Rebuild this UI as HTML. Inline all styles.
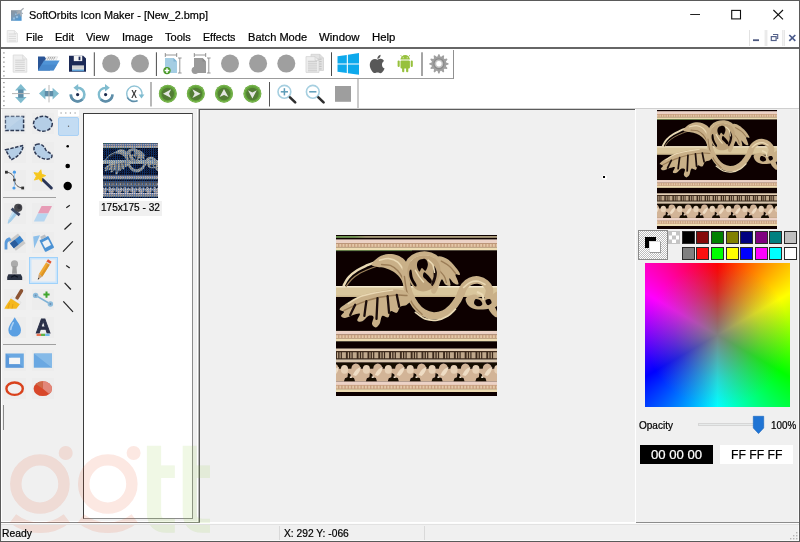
<!DOCTYPE html>
<html>
<head>
<meta charset="utf-8">
<title>SoftOrbits Icon Maker</title>
<style>
html,body{margin:0;padding:0;}
body{width:800px;height:542px;overflow:hidden;background:#f0f0f0;position:relative;font-family:"Liberation Sans",sans-serif;color:#000;}
.a{position:absolute;}
.t{position:absolute;white-space:nowrap;transform-origin:0 0;line-height:1;-webkit-text-stroke:0.22px currentColor;}
svg{position:absolute;overflow:visible;}
</style>
</head>
<body>
<!-- window frame -->
<div class="a" id="frame" style="left:0;top:0;width:798px;height:540px;border:1px solid #5a5a5a;"></div>
<!-- title + menu -->
<div class="a" id="titlebar" style="left:1px;top:1px;width:798px;height:46px;background:#fff;"></div>
<div class="a" id="menuline" style="left:1px;top:47px;width:798px;height:2px;background:#666;"></div>
<!-- toolbar background -->
<div class="a" id="tbbg" style="left:1px;top:49px;width:798px;height:59px;background:#fff;"></div>
<div class="a" id="tbline" style="left:1px;top:108px;width:798px;height:1px;background:#cfcfcf;"></div>


<!-- main panels -->
<div class="a" id="mdi" style="left:199px;top:109px;width:436px;height:414px;background:#f0f0f0;"></div>


<!-- toolbar 1 frame -->
<div class="a" style="left:1px;top:78px;width:453px;height:1px;background:#9c9c9c;"></div>
<div class="a" style="left:453px;top:50px;width:1px;height:29px;background:#909090;"></div>
<!-- toolbar 2 frame -->
<div class="a" style="left:357px;top:79px;width:2px;height:29px;background:#cbcbcb;"></div>

<!-- left tools panel -->
<div class="a" style="left:3.5px;top:113.2px;width:22px;height:21px;background:#ededed;"></div>
<div class="a" style="left:32.0px;top:113.2px;width:22px;height:21px;background:#ededed;"></div>
<div class="a" style="left:3.5px;top:142.0px;width:22px;height:21px;background:#ededed;"></div>
<div class="a" style="left:32.0px;top:142.0px;width:22px;height:21px;background:#ededed;"></div>
<div class="a" style="left:3.5px;top:169.5px;width:22px;height:21px;background:#ededed;"></div>
<div class="a" style="left:32.0px;top:169.5px;width:22px;height:21px;background:#ededed;"></div>
<div class="a" style="left:3.5px;top:203.2px;width:22px;height:21px;background:#ededed;"></div>
<div class="a" style="left:32.0px;top:203.2px;width:22px;height:21px;background:#ededed;"></div>
<div class="a" style="left:3.5px;top:231.5px;width:22px;height:21px;background:#ededed;"></div>
<div class="a" style="left:32.0px;top:231.5px;width:22px;height:21px;background:#ededed;"></div>
<div class="a" style="left:3.5px;top:260.0px;width:22px;height:21px;background:#ededed;"></div>
<div class="a" style="left:3.5px;top:288.5px;width:22px;height:21px;background:#ededed;"></div>
<div class="a" style="left:32.0px;top:288.5px;width:22px;height:21px;background:#ededed;"></div>
<div class="a" style="left:3.5px;top:316.5px;width:22px;height:21px;background:#ededed;"></div>
<div class="a" style="left:32.0px;top:316.5px;width:22px;height:21px;background:#ededed;"></div>
<div class="a" style="left:3.5px;top:350.0px;width:22px;height:21px;background:#ededed;"></div>
<div class="a" style="left:32.0px;top:350.0px;width:22px;height:21px;background:#ededed;"></div>
<div class="a" style="left:3.5px;top:378.2px;width:22px;height:21px;background:#ededed;"></div>
<div class="a" style="left:32.0px;top:378.2px;width:22px;height:21px;background:#ededed;"></div>

<div class="a" style="left:1px;top:109px;width:1px;height:414px;background:#fff;"></div>
<div class="a" style="left:58px;top:110px;width:21px;height:6px;background:#fff;"></div>
<div class="a" style="left:58px;top:116.5px;background:#c3dcf3;border:1px solid #a9d1f5;box-sizing:border-box;width:21px;height:19.5px;border-radius:2px;"></div>
<div class="a" style="left:29px;top:257px;width:29px;height:27px;box-sizing:border-box;border:1px solid #9fd2fb;background:#eeeff1;box-shadow:inset 0 0 0 1.5px #cbe5fb;"></div>
<div class="a" style="left:3px;top:197px;width:53px;height:1px;background:#a0a0a0;"></div>
<div class="a" style="left:3px;top:344px;width:53px;height:1px;background:#a0a0a0;"></div>
<div class="a" style="left:3px;top:405px;width:1px;height:25px;background:#8a8a8a;"></div>

<!-- thumbnail list -->
<div class="a" style="left:83px;top:113px;width:110px;height:406px;background:#fff;border-top:1px solid #3c3c3c;border-left:1px solid #3c3c3c;border-right:1px solid #8c8c8c;border-bottom:1px solid #8c8c8c;box-sizing:border-box;"></div>
<div class="a" style="left:99px;top:201px;width:63px;height:15px;background:#f0f0f0;"></div>

<!-- left dock frame (right + bottom) -->
<div class="a" style="left:197px;top:109px;width:1px;height:413px;background:#fff;"></div>
<div class="a" style="left:198px;top:109px;width:1px;height:413px;background:#b8b8b8;"></div><div class="a" style="left:199px;top:109px;width:1px;height:414px;background:#5e5e5e;"></div>
<div class="a" style="left:1px;top:521px;width:197px;height:1px;background:#fff;"></div>
<div class="a" style="left:1px;top:522px;width:199px;height:1px;background:#858585;"></div>

<!-- mdi client frame -->
<div class="a" style="left:200px;top:109px;width:435px;height:1px;background:#5c5c5c;"></div>
<div class="a" style="left:635px;top:109px;width:1px;height:414px;background:#fff;"></div>
<div class="a" style="left:200px;top:522px;width:436px;height:1px;background:#fff;"></div>

<!-- right panel -->
<div class="a" style="left:798px;top:109px;width:1px;height:432px;background:#fbfbfb;"></div>
<div class="a" style="left:636px;top:522px;width:163px;height:1px;background:#8c8c8c;"></div>

<svg style="left:336px;top:235px;overflow:hidden" width="161" height="161" viewBox="0 -1 161 161" preserveAspectRatio="none"><filter id="ob1"><feGaussianBlur stdDeviation="0.45"/></filter><g filter="url(#ob1)"><rect x="-4" y="-4" width="169" height="168" fill="#0b0506"/>
<linearGradient id="gtop" x1="0" x2="1" y1="0" y2="0"><stop offset="0" stop-color="#84b860"/><stop offset="0.13" stop-color="#8cb868"/><stop offset="0.2" stop-color="#c8bc90"/><stop offset="1" stop-color="#d4c29a"/></linearGradient>
<rect y="0.2" x="-4" width="169" height="1.5" fill="url(#gtop)"/>
<rect y="3.4" x="-4" width="169" height="3.9" fill="#ecd2c6"/>
<rect y="7.1" x="-4" width="169" height="4.6" fill="#c8a080"/>
<line x1="-3" x2="164" y1="9.4" y2="9.4" stroke="#e4c8a8" stroke-width="2.8" stroke-dasharray="1.8 1.4"/>
<rect y="11.5" x="-4" width="169" height="2.8" fill="#eedcb2"/>
<rect y="14.2" x="-4" width="80" height="0.9" fill="#6f9a50" opacity=".8"/>
<rect y="94.9" x="-4" width="169" height="3.7" fill="#ecd2c6"/>
<rect y="98.4" x="-4" width="169" height="4.4" fill="#c8a080"/>
<line x1="-3" x2="164" y1="100.6" y2="100.6" stroke="#e4c8a8" stroke-width="2.7" stroke-dasharray="1.8 1.4"/>
<rect y="102.6" x="-4" width="169" height="2.7" fill="#eedcb2"/>
<rect y="145.3" x="-4" width="169" height="3.9" fill="#ecd2c6"/>
<rect y="148.9" x="-4" width="169" height="4.5" fill="#c8a080"/>
<line x1="-3" x2="164" y1="151.2" y2="151.2" stroke="#e4c8a8" stroke-width="2.8" stroke-dasharray="1.8 1.4"/>
<rect y="153.2" x="-4" width="169" height="2.8" fill="#eedcb2"/>
<rect y="50" x="-4" width="169" height="11" fill="#d9c69c"/>
<rect y="50" x="-4" width="169" height="1.5" fill="#f4ead0"/>
<rect y="59.5" x="-4" width="169" height="1.5" fill="#cdb88e"/>
<rect y="112.5" x="-4" width="169" height="2.6" fill="#e6d0b6"/>
<rect y="115" x="-4" width="169" height="8.5" fill="#3c2a1c"/>
<line x1="1" x2="161" y1="119.2" y2="119.2" stroke="#bfa88c" stroke-width="6" stroke-dasharray="1.2 1.3 1.2 1.2 4 1.9"/>
<rect y="123.4" x="-4" width="169" height="3.1" fill="#d8c6ae"/>
<rect y="126.5" x="-4" width="169" height="18.8" fill="#d2b497"/>
<rect y="126.5" x="-4" width="169" height="6.2" fill="#120806"/>
<ellipse cx="-2.0" cy="133" rx="4.6" ry="5.6" fill="#d2b497"/>
<ellipse cx="8.5" cy="133.4" rx="3.6" ry="4.4" fill="#e6d0b6"/>
<path d="M-5.0 139q3 -7 8 -8q-1 6 -5 9z" fill="#eedcc4"/>
<path d="M8.0 145.3l1 -3l2.5 -1l0.5 -4.2l2.4 1.2l0.6 3l3 0.8l1 3.2z" fill="#120806"/>
<rect x="13.8" y="140.4" width="2" height="1.6" fill="#f0e4d0"/>
<ellipse cx="19.9" cy="133" rx="4.6" ry="5.6" fill="#d2b497"/>
<ellipse cx="30.4" cy="133.4" rx="3.6" ry="4.4" fill="#e6d0b6"/>
<path d="M16.9 139q3 -7 8 -8q-1 6 -5 9z" fill="#eedcc4"/>
<path d="M29.9 145.3l1 -3l2.5 -1l0.5 -4.2l2.4 1.2l0.6 3l3 0.8l1 3.2z" fill="#120806"/>
<rect x="35.7" y="140.4" width="2" height="1.6" fill="#f0e4d0"/>
<ellipse cx="41.8" cy="133" rx="4.6" ry="5.6" fill="#d2b497"/>
<ellipse cx="52.3" cy="133.4" rx="3.6" ry="4.4" fill="#e6d0b6"/>
<path d="M38.8 139q3 -7 8 -8q-1 6 -5 9z" fill="#eedcc4"/>
<path d="M51.8 145.3l1 -3l2.5 -1l0.5 -4.2l2.4 1.2l0.6 3l3 0.8l1 3.2z" fill="#120806"/>
<rect x="57.6" y="140.4" width="2" height="1.6" fill="#f0e4d0"/>
<ellipse cx="63.7" cy="133" rx="4.6" ry="5.6" fill="#d2b497"/>
<ellipse cx="74.2" cy="133.4" rx="3.6" ry="4.4" fill="#e6d0b6"/>
<path d="M60.7 139q3 -7 8 -8q-1 6 -5 9z" fill="#eedcc4"/>
<path d="M73.7 145.3l1 -3l2.5 -1l0.5 -4.2l2.4 1.2l0.6 3l3 0.8l1 3.2z" fill="#120806"/>
<rect x="79.5" y="140.4" width="2" height="1.6" fill="#f0e4d0"/>
<ellipse cx="85.6" cy="133" rx="4.6" ry="5.6" fill="#d2b497"/>
<ellipse cx="96.1" cy="133.4" rx="3.6" ry="4.4" fill="#e6d0b6"/>
<path d="M82.6 139q3 -7 8 -8q-1 6 -5 9z" fill="#eedcc4"/>
<path d="M95.6 145.3l1 -3l2.5 -1l0.5 -4.2l2.4 1.2l0.6 3l3 0.8l1 3.2z" fill="#120806"/>
<rect x="101.4" y="140.4" width="2" height="1.6" fill="#f0e4d0"/>
<ellipse cx="107.5" cy="133" rx="4.6" ry="5.6" fill="#d2b497"/>
<ellipse cx="118.0" cy="133.4" rx="3.6" ry="4.4" fill="#e6d0b6"/>
<path d="M104.5 139q3 -7 8 -8q-1 6 -5 9z" fill="#eedcc4"/>
<path d="M117.5 145.3l1 -3l2.5 -1l0.5 -4.2l2.4 1.2l0.6 3l3 0.8l1 3.2z" fill="#120806"/>
<rect x="123.3" y="140.4" width="2" height="1.6" fill="#f0e4d0"/>
<ellipse cx="129.4" cy="133" rx="4.6" ry="5.6" fill="#d2b497"/>
<ellipse cx="139.9" cy="133.4" rx="3.6" ry="4.4" fill="#e6d0b6"/>
<path d="M126.4 139q3 -7 8 -8q-1 6 -5 9z" fill="#eedcc4"/>
<path d="M139.4 145.3l1 -3l2.5 -1l0.5 -4.2l2.4 1.2l0.6 3l3 0.8l1 3.2z" fill="#120806"/>
<rect x="145.2" y="140.4" width="2" height="1.6" fill="#f0e4d0"/>
<ellipse cx="151.3" cy="133" rx="4.6" ry="5.6" fill="#d2b497"/>
<ellipse cx="161.8" cy="133.4" rx="3.6" ry="4.4" fill="#e6d0b6"/>
<path d="M148.3 139q3 -7 8 -8q-1 6 -5 9z" fill="#eedcc4"/>
<path d="M161.3 145.3l1 -3l2.5 -1l0.5 -4.2l2.4 1.2l0.6 3l3 0.8l1 3.2z" fill="#120806"/>
<rect x="167.1" y="140.4" width="2" height="1.6" fill="#f0e4d0"/>
<ellipse cx="173.2" cy="133" rx="4.6" ry="5.6" fill="#d2b497"/>
<ellipse cx="183.7" cy="133.4" rx="3.6" ry="4.4" fill="#e6d0b6"/>
<path d="M170.2 139q3 -7 8 -8q-1 6 -5 9z" fill="#eedcc4"/>
<path d="M183.2 145.3l1 -3l2.5 -1l0.5 -4.2l2.4 1.2l0.6 3l3 0.8l1 3.2z" fill="#120806"/>
<rect x="189.0" y="140.4" width="2" height="1.6" fill="#f0e4d0"/>
<path d="M7.7 49.5C8.5 48.1 10.3 43.9 12.6 41.4C14.8 38.9 18.1 36.3 21.3 34.3C24.4 32.3 28.2 30.7 31.4 29.2C34.6 27.8 39.0 26.4 40.5 25.8" fill="none" stroke="#ead9b4" stroke-width="2.5" stroke-linecap="round" stroke-linejoin="round"/>
<path d="M10.1 50.5C11.1 49.3 13.5 45.4 15.8 43.2C18.1 41.0 20.9 39.1 23.9 37.3C26.9 35.6 31.0 33.9 34.0 32.7C37.1 31.4 40.8 30.3 42.1 29.8" fill="none" stroke="#9c7e58" stroke-width="1.2" stroke-linecap="round" stroke-linejoin="round"/>
<path d="M35.4 28.6C35.7 27.0 40.1 22.9 42.9 21.1C45.7 19.4 49.2 18.4 52.2 18.1C55.3 17.8 58.5 18.4 61.2 19.3C63.9 20.3 66.6 21.8 68.4 23.8C70.3 25.7 71.3 28.3 72.1 31.1C72.9 33.8 73.4 37.1 73.3 40.4C73.2 43.6 72.2 49.2 71.3 50.5C70.4 51.9 69.1 50.0 67.8 48.5C66.6 47.0 65.6 43.5 63.8 41.4C62.0 39.2 59.6 37.1 57.1 35.5C54.6 33.9 51.6 32.6 49.0 31.9C46.4 31.1 43.8 31.4 41.5 30.9C39.3 30.3 35.2 30.3 35.4 28.6Z" fill="#c9b088"/>
<path d="M43.5 24.2C45.1 23.9 50.0 22.2 53.1 22.6C56.1 22.9 59.3 24.2 61.8 26.2C64.2 28.2 66.8 33.0 67.8 34.3" fill="none" stroke="#ead9b4" stroke-width="1.6" stroke-linecap="round" stroke-linejoin="round"/>
<path d="M45.6 28.6C47.0 28.8 51.6 28.4 54.3 29.4C57.0 30.5 59.7 32.5 61.8 34.7C63.9 36.9 66.0 41.1 66.8 42.4" fill="none" stroke="#9c7e58" stroke-width="1.5" stroke-linecap="round" stroke-linejoin="round"/>
<path d="M70.1 32.3C70.1 34.3 69.6 40.3 70.1 44.4C70.5 48.5 71.4 52.9 72.9 57.0C74.5 61.1 77.0 65.8 79.4 69.1C81.8 72.4 84.4 75.0 87.5 76.8C90.5 78.6 94.2 79.7 97.6 79.9C101.0 80.0 104.7 79.2 107.7 77.8C110.8 76.5 113.5 74.1 115.8 71.8C118.2 69.4 120.4 66.1 121.9 63.7C123.5 61.2 124.6 58.1 125.2 57.0" fill="none" stroke="#c9b088" stroke-width="7.4" stroke-linecap="round" stroke-linejoin="round"/>
<path d="M68.4 40.4C68.9 42.9 69.5 50.8 70.9 55.6C72.3 60.3 74.4 64.9 77.0 68.7C79.5 72.5 84.5 76.8 86.1 78.4" fill="none" stroke="#9c7e58" stroke-width="1.4" stroke-linecap="round" stroke-linejoin="round"/>
<path d="M79.4 76.4C81.0 77.5 85.5 81.6 89.1 82.9C92.8 84.2 97.5 84.6 101.3 84.1C105.0 83.6 108.7 81.9 111.8 80.1C114.8 78.2 118.2 74.3 119.5 73.2" fill="none" stroke="#ead9b4" stroke-width="1.7" stroke-linecap="round" stroke-linejoin="round"/>
<path d="M125.2 57.0C125.7 55.8 126.8 52.1 128.4 50.1C129.9 48.1 132.2 46.2 134.5 45.2C136.8 44.2 139.7 43.7 142.2 44.0C144.7 44.4 147.6 45.7 149.5 47.3C151.3 48.8 153.0 51.1 153.5 53.3C154.0 55.6 152.5 59.4 152.3 60.6" fill="none" stroke="#c9b088" stroke-width="7.6" stroke-linecap="round" stroke-linejoin="round"/>
<path d="M127.6 51.5C128.7 50.7 131.6 47.5 134.1 46.5C136.5 45.4 139.7 44.9 142.2 45.2C144.7 45.6 147.9 47.9 149.0 48.5" fill="none" stroke="#ead9b4" stroke-width="1.6" stroke-linecap="round" stroke-linejoin="round"/>
<path d="M129.6 63.1C129.8 61.4 132.4 60.4 134.1 59.6C135.7 58.9 138.3 58.3 139.7 58.6C141.2 58.9 141.3 61.0 142.8 61.6C144.3 62.2 146.7 62.8 148.8 62.2C151.0 61.7 153.7 59.7 155.9 58.6C158.1 57.5 160.7 54.9 162.0 55.6C163.4 56.2 164.4 60.1 164.0 62.7C163.7 65.2 162.3 69.0 160.0 70.8C157.6 72.5 153.2 72.8 149.9 73.2C146.5 73.6 142.6 73.8 139.7 73.2C136.9 72.6 134.3 71.4 132.6 69.7C131.0 68.1 129.4 64.7 129.6 63.1Z" fill="#c9b088"/>
<path d="M139.7 63.1C140.8 62.6 143.7 63.7 144.8 64.7C145.9 65.6 146.7 67.8 146.2 68.7C145.7 69.7 143.1 70.6 141.8 70.3C140.4 70.1 138.5 68.7 138.1 67.5C137.8 66.3 138.6 63.5 139.7 63.1Z" fill="#0b0506"/>
<path d="M149.5 64.3C149.9 63.3 152.9 62.6 153.9 63.1C154.9 63.5 155.9 66.1 155.5 67.1C155.1 68.1 152.5 69.6 151.5 69.1C150.5 68.7 149.0 65.3 149.5 64.3Z" fill="#0b0506"/>
<path d="M141.8 56.2C142.5 56.6 145.3 57.5 146.2 58.6C147.2 59.8 147.2 62.3 147.4 63.1" fill="none" stroke="#ead9b4" stroke-width="2.2" stroke-linecap="round" stroke-linejoin="round"/>
<path d="M152.3 70.8C152.8 69.6 156.3 68.6 158.0 69.9C159.6 71.3 161.7 77.0 162.0 78.9C162.3 80.7 161.2 81.6 160.0 81.3C158.8 80.9 156.2 78.6 154.9 76.8C153.6 75.1 151.8 71.9 152.3 70.8Z" fill="#c9b088"/>
<path d="M71.3 31.9C71.8 30.7 72.4 26.6 74.1 24.6C75.8 22.6 78.7 20.7 81.4 19.7C84.1 18.7 87.5 18.2 90.3 18.5C93.2 18.8 96.3 20.0 98.4 21.3C100.6 22.7 102.1 24.7 103.3 26.6C104.4 28.5 105.2 30.7 105.3 32.7C105.4 34.7 104.3 37.7 104.1 38.8" fill="none" stroke="#c9b088" stroke-width="6.2" stroke-linecap="round" stroke-linejoin="round"/>
<path d="M75.3 25.0C76.4 24.3 79.5 21.8 82.0 20.9C84.5 20.1 87.7 19.5 90.3 19.7C92.9 20.0 96.4 22.1 97.6 22.6" fill="none" stroke="#ead9b4" stroke-width="1.4" stroke-linecap="round" stroke-linejoin="round"/>
<path d="M102.3 20.5C103.8 19.4 107.9 21.3 110.4 22.6C112.8 23.8 115.1 26.2 117.1 28.2C119.0 30.3 121.2 33.0 122.3 34.7C123.5 36.5 124.4 38.1 123.9 38.8C123.5 39.4 119.9 37.5 119.5 38.4C119.1 39.2 121.0 42.3 121.5 44.0C122.0 45.7 123.0 48.0 122.3 48.5C121.6 48.9 118.9 47.9 117.5 46.9C116.0 45.8 113.9 42.0 113.4 42.4C112.9 42.8 115.1 48.5 114.4 49.5C113.7 50.5 110.8 49.5 109.4 48.5C107.9 47.5 106.9 42.9 105.7 43.4C104.5 43.9 103.4 49.2 102.3 51.5C101.1 53.9 100.0 56.9 98.8 57.6C97.6 58.3 95.5 57.4 95.2 55.6C94.8 53.7 96.1 49.3 96.8 46.5C97.5 43.6 98.9 41.2 99.6 38.4C100.4 35.5 100.8 32.2 101.3 29.2C101.7 26.3 100.7 21.6 102.3 20.5Z" fill="#c9b088"/>
<path d="M105.3 25.2C106.7 26.0 111.0 28.2 113.4 30.3C115.8 32.3 118.5 36.2 119.5 37.3" fill="none" stroke="#9c7e58" stroke-width="1.4" stroke-linecap="round" stroke-linejoin="round"/>
<path d="M103.3 34.3C104.1 35.3 107.2 38.4 108.3 40.4C109.5 42.4 110.0 45.4 110.4 46.5" fill="none" stroke="#9c7e58" stroke-width="1.3" stroke-linecap="round" stroke-linejoin="round"/>
<path d="M74.1 26.2C75.8 23.6 78.7 21.7 81.4 20.5C84.1 19.4 87.5 19.0 90.3 19.3C93.2 19.6 96.3 20.8 98.4 22.2C100.5 23.5 101.9 25.5 102.9 27.4C103.9 29.3 104.4 31.3 104.5 33.5C104.6 35.7 104.2 37.9 103.3 40.4C102.4 42.9 100.6 46.3 99.2 48.5C97.8 50.6 96.8 52.2 94.8 53.3C92.8 54.5 89.5 55.4 87.1 55.4C84.6 55.4 82.2 54.8 80.0 53.3C77.8 51.9 75.6 49.3 74.1 46.5C72.7 43.6 71.3 39.7 71.3 36.3C71.3 33.0 72.4 28.8 74.1 26.2Z" fill="#bfa47c"/>
<path d="M82.6 24.6C84.0 23.4 87.6 22.4 89.1 23.0C90.7 23.6 91.9 26.3 91.9 28.2C92.0 30.2 90.5 34.1 89.5 34.7C88.5 35.3 86.9 31.7 85.9 31.9C84.9 32.0 84.2 35.9 83.4 35.5C82.6 35.2 81.1 31.7 81.0 29.8C80.9 28.0 81.3 25.7 82.6 24.6Z" fill="#0b0506"/>
<path d="M88.7 36.3C90.1 36.9 94.6 42.1 95.6 44.0C96.5 45.9 95.3 47.7 94.4 47.7C93.4 47.6 91.1 44.8 89.9 43.6C88.7 42.4 87.3 41.6 87.1 40.4C86.9 39.2 87.3 35.7 88.7 36.3Z" fill="#0b0506"/>
<path d="M75.3 33.9C75.9 34.9 76.1 39.5 77.0 42.0C77.8 44.5 80.3 47.5 80.6 48.9C80.9 50.2 79.7 51.2 78.6 50.1C77.5 49.0 75.0 44.8 74.1 42.4C73.2 40.0 73.1 37.3 73.3 35.9C73.5 34.5 74.7 32.9 75.3 33.9Z" fill="#0b0506"/>
<path d="M98.4 30.3C99.0 30.7 100.6 34.0 100.9 36.3C101.1 38.6 100.3 41.8 99.6 44.0C99.0 46.2 97.5 49.0 96.8 49.7C96.1 50.4 95.0 49.6 95.2 48.1C95.3 46.5 97.3 42.7 97.6 40.4C97.9 38.0 97.1 35.6 97.2 33.9C97.3 32.2 97.8 29.8 98.4 30.3Z" fill="#1a0e0a"/>
<path d="M92.1 24.2C92.9 24.9 95.8 26.6 96.8 28.6C97.8 30.7 98.2 35.0 98.4 36.3" fill="none" stroke="#ead9b4" stroke-width="1.6" stroke-linecap="round" stroke-linejoin="round"/>
<path d="M79.4 34.3C80.0 35.3 81.7 38.4 83.0 40.4C84.4 42.3 86.7 45.1 87.5 46.0" fill="none" stroke="#ead9b4" stroke-width="1.5" stroke-linecap="round" stroke-linejoin="round"/>
<path d="M3.6 73.2C4.2 71.7 7.8 69.3 11.1 67.1C14.5 64.9 19.1 61.7 23.9 59.8C28.7 57.9 34.6 56.8 40.1 55.8C45.6 54.7 51.7 53.4 56.7 53.3C61.7 53.3 66.8 53.7 69.9 55.4C73.0 57.0 75.2 60.8 75.3 63.1C75.5 65.3 72.7 67.4 70.9 68.7C69.1 70.0 66.1 69.4 64.4 70.8C62.7 72.1 62.4 76.1 60.8 76.8C59.1 77.6 56.1 74.5 54.7 75.2C53.3 76.0 53.7 80.5 52.2 81.3C50.8 82.1 47.6 78.8 46.2 79.9C44.7 81.0 44.7 86.0 43.5 88.0C42.4 89.9 40.7 91.4 39.5 91.4C38.2 91.4 36.4 89.7 36.0 88.0C35.7 86.2 38.1 82.2 37.5 80.9C36.9 79.5 34.3 79.1 32.4 79.9C30.5 80.6 28.2 84.6 26.3 85.3C24.5 86.1 21.7 85.8 21.3 84.5C20.9 83.3 24.6 78.8 23.9 77.8C23.2 76.9 19.7 78.2 17.2 78.9C14.7 79.5 11.1 81.7 9.1 81.9C7.1 82.1 5.2 80.9 5.1 79.9C4.9 78.9 8.3 76.9 8.1 75.8C7.9 74.7 3.1 74.6 3.6 73.2Z" fill="#c9b088"/>
<path d="M8.1 74.4C10.8 73.2 18.6 69.2 24.3 67.1C30.0 65.0 36.5 63.0 42.5 61.6C48.6 60.3 56.0 59.3 60.8 59.0C65.5 58.7 69.2 59.5 70.9 59.6" fill="none" stroke="#9c7e58" stroke-width="1.5" stroke-linecap="round" stroke-linejoin="round"/>
<path d="M19.2 68.7C18.4 70.4 15.0 77.2 14.2 78.9" fill="none" stroke="#1c100a" stroke-width="2.3" stroke-linecap="round" stroke-linejoin="round"/>
<path d="M30.4 65.1C30.0 67.5 28.7 77.4 28.4 79.9" fill="none" stroke="#1c100a" stroke-width="2.3" stroke-linecap="round" stroke-linejoin="round"/>
<path d="M41.5 62.2C41.3 65.7 40.7 79.5 40.5 82.9" fill="none" stroke="#1c100a" stroke-width="2.3" stroke-linecap="round" stroke-linejoin="round"/>
<path d="M51.6 60.2C51.9 63.0 52.8 74.1 53.1 76.8" fill="none" stroke="#1c100a" stroke-width="2.3" stroke-linecap="round" stroke-linejoin="round"/>
<path d="M60.8 59.0C61.2 61.0 62.8 68.8 63.2 70.8" fill="none" stroke="#1c100a" stroke-width="2.3" stroke-linecap="round" stroke-linejoin="round"/>
<path d="M12.2 67.7C14.2 66.5 19.6 62.5 24.3 60.6C29.0 58.8 35.1 57.7 40.5 56.6C45.9 55.5 54.0 54.6 56.7 54.1" fill="none" stroke="#ead9b4" stroke-width="1.4" stroke-linecap="round" stroke-linejoin="round"/></g></svg>
<svg style="left:657px;top:110px;overflow:hidden" width="120" height="119" viewBox="0 1.8 161 158.2" preserveAspectRatio="none"><filter id="ob2"><feGaussianBlur stdDeviation="0.45"/></filter><g filter="url(#ob2)"><rect x="-4" y="-4" width="169" height="168" fill="#0b0506"/>
<linearGradient id="gtop" x1="0" x2="1" y1="0" y2="0"><stop offset="0" stop-color="#84b860"/><stop offset="0.13" stop-color="#8cb868"/><stop offset="0.2" stop-color="#c8bc90"/><stop offset="1" stop-color="#d4c29a"/></linearGradient>
<rect y="0.2" x="-4" width="169" height="1.5" fill="url(#gtop)"/>
<rect y="3.4" x="-4" width="169" height="3.9" fill="#ecd2c6"/>
<rect y="7.1" x="-4" width="169" height="4.6" fill="#c8a080"/>
<line x1="-3" x2="164" y1="9.4" y2="9.4" stroke="#e4c8a8" stroke-width="2.8" stroke-dasharray="1.8 1.4"/>
<rect y="11.5" x="-4" width="169" height="2.8" fill="#eedcb2"/>
<rect y="14.2" x="-4" width="80" height="0.9" fill="#6f9a50" opacity=".8"/>
<rect y="94.9" x="-4" width="169" height="3.7" fill="#ecd2c6"/>
<rect y="98.4" x="-4" width="169" height="4.4" fill="#c8a080"/>
<line x1="-3" x2="164" y1="100.6" y2="100.6" stroke="#e4c8a8" stroke-width="2.7" stroke-dasharray="1.8 1.4"/>
<rect y="102.6" x="-4" width="169" height="2.7" fill="#eedcb2"/>
<rect y="145.3" x="-4" width="169" height="3.9" fill="#ecd2c6"/>
<rect y="148.9" x="-4" width="169" height="4.5" fill="#c8a080"/>
<line x1="-3" x2="164" y1="151.2" y2="151.2" stroke="#e4c8a8" stroke-width="2.8" stroke-dasharray="1.8 1.4"/>
<rect y="153.2" x="-4" width="169" height="2.8" fill="#eedcb2"/>
<rect y="50" x="-4" width="169" height="11" fill="#d9c69c"/>
<rect y="50" x="-4" width="169" height="1.5" fill="#f4ead0"/>
<rect y="59.5" x="-4" width="169" height="1.5" fill="#cdb88e"/>
<rect y="112.5" x="-4" width="169" height="2.6" fill="#e6d0b6"/>
<rect y="115" x="-4" width="169" height="8.5" fill="#3c2a1c"/>
<line x1="1" x2="161" y1="119.2" y2="119.2" stroke="#bfa88c" stroke-width="6" stroke-dasharray="1.2 1.3 1.2 1.2 4 1.9"/>
<rect y="123.4" x="-4" width="169" height="3.1" fill="#d8c6ae"/>
<rect y="126.5" x="-4" width="169" height="18.8" fill="#d2b497"/>
<rect y="126.5" x="-4" width="169" height="6.2" fill="#120806"/>
<ellipse cx="-2.0" cy="133" rx="4.6" ry="5.6" fill="#d2b497"/>
<ellipse cx="8.5" cy="133.4" rx="3.6" ry="4.4" fill="#e6d0b6"/>
<path d="M-5.0 139q3 -7 8 -8q-1 6 -5 9z" fill="#eedcc4"/>
<path d="M8.0 145.3l1 -3l2.5 -1l0.5 -4.2l2.4 1.2l0.6 3l3 0.8l1 3.2z" fill="#120806"/>
<rect x="13.8" y="140.4" width="2" height="1.6" fill="#f0e4d0"/>
<ellipse cx="19.9" cy="133" rx="4.6" ry="5.6" fill="#d2b497"/>
<ellipse cx="30.4" cy="133.4" rx="3.6" ry="4.4" fill="#e6d0b6"/>
<path d="M16.9 139q3 -7 8 -8q-1 6 -5 9z" fill="#eedcc4"/>
<path d="M29.9 145.3l1 -3l2.5 -1l0.5 -4.2l2.4 1.2l0.6 3l3 0.8l1 3.2z" fill="#120806"/>
<rect x="35.7" y="140.4" width="2" height="1.6" fill="#f0e4d0"/>
<ellipse cx="41.8" cy="133" rx="4.6" ry="5.6" fill="#d2b497"/>
<ellipse cx="52.3" cy="133.4" rx="3.6" ry="4.4" fill="#e6d0b6"/>
<path d="M38.8 139q3 -7 8 -8q-1 6 -5 9z" fill="#eedcc4"/>
<path d="M51.8 145.3l1 -3l2.5 -1l0.5 -4.2l2.4 1.2l0.6 3l3 0.8l1 3.2z" fill="#120806"/>
<rect x="57.6" y="140.4" width="2" height="1.6" fill="#f0e4d0"/>
<ellipse cx="63.7" cy="133" rx="4.6" ry="5.6" fill="#d2b497"/>
<ellipse cx="74.2" cy="133.4" rx="3.6" ry="4.4" fill="#e6d0b6"/>
<path d="M60.7 139q3 -7 8 -8q-1 6 -5 9z" fill="#eedcc4"/>
<path d="M73.7 145.3l1 -3l2.5 -1l0.5 -4.2l2.4 1.2l0.6 3l3 0.8l1 3.2z" fill="#120806"/>
<rect x="79.5" y="140.4" width="2" height="1.6" fill="#f0e4d0"/>
<ellipse cx="85.6" cy="133" rx="4.6" ry="5.6" fill="#d2b497"/>
<ellipse cx="96.1" cy="133.4" rx="3.6" ry="4.4" fill="#e6d0b6"/>
<path d="M82.6 139q3 -7 8 -8q-1 6 -5 9z" fill="#eedcc4"/>
<path d="M95.6 145.3l1 -3l2.5 -1l0.5 -4.2l2.4 1.2l0.6 3l3 0.8l1 3.2z" fill="#120806"/>
<rect x="101.4" y="140.4" width="2" height="1.6" fill="#f0e4d0"/>
<ellipse cx="107.5" cy="133" rx="4.6" ry="5.6" fill="#d2b497"/>
<ellipse cx="118.0" cy="133.4" rx="3.6" ry="4.4" fill="#e6d0b6"/>
<path d="M104.5 139q3 -7 8 -8q-1 6 -5 9z" fill="#eedcc4"/>
<path d="M117.5 145.3l1 -3l2.5 -1l0.5 -4.2l2.4 1.2l0.6 3l3 0.8l1 3.2z" fill="#120806"/>
<rect x="123.3" y="140.4" width="2" height="1.6" fill="#f0e4d0"/>
<ellipse cx="129.4" cy="133" rx="4.6" ry="5.6" fill="#d2b497"/>
<ellipse cx="139.9" cy="133.4" rx="3.6" ry="4.4" fill="#e6d0b6"/>
<path d="M126.4 139q3 -7 8 -8q-1 6 -5 9z" fill="#eedcc4"/>
<path d="M139.4 145.3l1 -3l2.5 -1l0.5 -4.2l2.4 1.2l0.6 3l3 0.8l1 3.2z" fill="#120806"/>
<rect x="145.2" y="140.4" width="2" height="1.6" fill="#f0e4d0"/>
<ellipse cx="151.3" cy="133" rx="4.6" ry="5.6" fill="#d2b497"/>
<ellipse cx="161.8" cy="133.4" rx="3.6" ry="4.4" fill="#e6d0b6"/>
<path d="M148.3 139q3 -7 8 -8q-1 6 -5 9z" fill="#eedcc4"/>
<path d="M161.3 145.3l1 -3l2.5 -1l0.5 -4.2l2.4 1.2l0.6 3l3 0.8l1 3.2z" fill="#120806"/>
<rect x="167.1" y="140.4" width="2" height="1.6" fill="#f0e4d0"/>
<ellipse cx="173.2" cy="133" rx="4.6" ry="5.6" fill="#d2b497"/>
<ellipse cx="183.7" cy="133.4" rx="3.6" ry="4.4" fill="#e6d0b6"/>
<path d="M170.2 139q3 -7 8 -8q-1 6 -5 9z" fill="#eedcc4"/>
<path d="M183.2 145.3l1 -3l2.5 -1l0.5 -4.2l2.4 1.2l0.6 3l3 0.8l1 3.2z" fill="#120806"/>
<rect x="189.0" y="140.4" width="2" height="1.6" fill="#f0e4d0"/>
<path d="M7.7 49.5C8.5 48.1 10.3 43.9 12.6 41.4C14.8 38.9 18.1 36.3 21.3 34.3C24.4 32.3 28.2 30.7 31.4 29.2C34.6 27.8 39.0 26.4 40.5 25.8" fill="none" stroke="#ead9b4" stroke-width="2.5" stroke-linecap="round" stroke-linejoin="round"/>
<path d="M10.1 50.5C11.1 49.3 13.5 45.4 15.8 43.2C18.1 41.0 20.9 39.1 23.9 37.3C26.9 35.6 31.0 33.9 34.0 32.7C37.1 31.4 40.8 30.3 42.1 29.8" fill="none" stroke="#9c7e58" stroke-width="1.2" stroke-linecap="round" stroke-linejoin="round"/>
<path d="M35.4 28.6C35.7 27.0 40.1 22.9 42.9 21.1C45.7 19.4 49.2 18.4 52.2 18.1C55.3 17.8 58.5 18.4 61.2 19.3C63.9 20.3 66.6 21.8 68.4 23.8C70.3 25.7 71.3 28.3 72.1 31.1C72.9 33.8 73.4 37.1 73.3 40.4C73.2 43.6 72.2 49.2 71.3 50.5C70.4 51.9 69.1 50.0 67.8 48.5C66.6 47.0 65.6 43.5 63.8 41.4C62.0 39.2 59.6 37.1 57.1 35.5C54.6 33.9 51.6 32.6 49.0 31.9C46.4 31.1 43.8 31.4 41.5 30.9C39.3 30.3 35.2 30.3 35.4 28.6Z" fill="#c9b088"/>
<path d="M43.5 24.2C45.1 23.9 50.0 22.2 53.1 22.6C56.1 22.9 59.3 24.2 61.8 26.2C64.2 28.2 66.8 33.0 67.8 34.3" fill="none" stroke="#ead9b4" stroke-width="1.6" stroke-linecap="round" stroke-linejoin="round"/>
<path d="M45.6 28.6C47.0 28.8 51.6 28.4 54.3 29.4C57.0 30.5 59.7 32.5 61.8 34.7C63.9 36.9 66.0 41.1 66.8 42.4" fill="none" stroke="#9c7e58" stroke-width="1.5" stroke-linecap="round" stroke-linejoin="round"/>
<path d="M70.1 32.3C70.1 34.3 69.6 40.3 70.1 44.4C70.5 48.5 71.4 52.9 72.9 57.0C74.5 61.1 77.0 65.8 79.4 69.1C81.8 72.4 84.4 75.0 87.5 76.8C90.5 78.6 94.2 79.7 97.6 79.9C101.0 80.0 104.7 79.2 107.7 77.8C110.8 76.5 113.5 74.1 115.8 71.8C118.2 69.4 120.4 66.1 121.9 63.7C123.5 61.2 124.6 58.1 125.2 57.0" fill="none" stroke="#c9b088" stroke-width="7.4" stroke-linecap="round" stroke-linejoin="round"/>
<path d="M68.4 40.4C68.9 42.9 69.5 50.8 70.9 55.6C72.3 60.3 74.4 64.9 77.0 68.7C79.5 72.5 84.5 76.8 86.1 78.4" fill="none" stroke="#9c7e58" stroke-width="1.4" stroke-linecap="round" stroke-linejoin="round"/>
<path d="M79.4 76.4C81.0 77.5 85.5 81.6 89.1 82.9C92.8 84.2 97.5 84.6 101.3 84.1C105.0 83.6 108.7 81.9 111.8 80.1C114.8 78.2 118.2 74.3 119.5 73.2" fill="none" stroke="#ead9b4" stroke-width="1.7" stroke-linecap="round" stroke-linejoin="round"/>
<path d="M125.2 57.0C125.7 55.8 126.8 52.1 128.4 50.1C129.9 48.1 132.2 46.2 134.5 45.2C136.8 44.2 139.7 43.7 142.2 44.0C144.7 44.4 147.6 45.7 149.5 47.3C151.3 48.8 153.0 51.1 153.5 53.3C154.0 55.6 152.5 59.4 152.3 60.6" fill="none" stroke="#c9b088" stroke-width="7.6" stroke-linecap="round" stroke-linejoin="round"/>
<path d="M127.6 51.5C128.7 50.7 131.6 47.5 134.1 46.5C136.5 45.4 139.7 44.9 142.2 45.2C144.7 45.6 147.9 47.9 149.0 48.5" fill="none" stroke="#ead9b4" stroke-width="1.6" stroke-linecap="round" stroke-linejoin="round"/>
<path d="M129.6 63.1C129.8 61.4 132.4 60.4 134.1 59.6C135.7 58.9 138.3 58.3 139.7 58.6C141.2 58.9 141.3 61.0 142.8 61.6C144.3 62.2 146.7 62.8 148.8 62.2C151.0 61.7 153.7 59.7 155.9 58.6C158.1 57.5 160.7 54.9 162.0 55.6C163.4 56.2 164.4 60.1 164.0 62.7C163.7 65.2 162.3 69.0 160.0 70.8C157.6 72.5 153.2 72.8 149.9 73.2C146.5 73.6 142.6 73.8 139.7 73.2C136.9 72.6 134.3 71.4 132.6 69.7C131.0 68.1 129.4 64.7 129.6 63.1Z" fill="#c9b088"/>
<path d="M139.7 63.1C140.8 62.6 143.7 63.7 144.8 64.7C145.9 65.6 146.7 67.8 146.2 68.7C145.7 69.7 143.1 70.6 141.8 70.3C140.4 70.1 138.5 68.7 138.1 67.5C137.8 66.3 138.6 63.5 139.7 63.1Z" fill="#0b0506"/>
<path d="M149.5 64.3C149.9 63.3 152.9 62.6 153.9 63.1C154.9 63.5 155.9 66.1 155.5 67.1C155.1 68.1 152.5 69.6 151.5 69.1C150.5 68.7 149.0 65.3 149.5 64.3Z" fill="#0b0506"/>
<path d="M141.8 56.2C142.5 56.6 145.3 57.5 146.2 58.6C147.2 59.8 147.2 62.3 147.4 63.1" fill="none" stroke="#ead9b4" stroke-width="2.2" stroke-linecap="round" stroke-linejoin="round"/>
<path d="M152.3 70.8C152.8 69.6 156.3 68.6 158.0 69.9C159.6 71.3 161.7 77.0 162.0 78.9C162.3 80.7 161.2 81.6 160.0 81.3C158.8 80.9 156.2 78.6 154.9 76.8C153.6 75.1 151.8 71.9 152.3 70.8Z" fill="#c9b088"/>
<path d="M71.3 31.9C71.8 30.7 72.4 26.6 74.1 24.6C75.8 22.6 78.7 20.7 81.4 19.7C84.1 18.7 87.5 18.2 90.3 18.5C93.2 18.8 96.3 20.0 98.4 21.3C100.6 22.7 102.1 24.7 103.3 26.6C104.4 28.5 105.2 30.7 105.3 32.7C105.4 34.7 104.3 37.7 104.1 38.8" fill="none" stroke="#c9b088" stroke-width="6.2" stroke-linecap="round" stroke-linejoin="round"/>
<path d="M75.3 25.0C76.4 24.3 79.5 21.8 82.0 20.9C84.5 20.1 87.7 19.5 90.3 19.7C92.9 20.0 96.4 22.1 97.6 22.6" fill="none" stroke="#ead9b4" stroke-width="1.4" stroke-linecap="round" stroke-linejoin="round"/>
<path d="M102.3 20.5C103.8 19.4 107.9 21.3 110.4 22.6C112.8 23.8 115.1 26.2 117.1 28.2C119.0 30.3 121.2 33.0 122.3 34.7C123.5 36.5 124.4 38.1 123.9 38.8C123.5 39.4 119.9 37.5 119.5 38.4C119.1 39.2 121.0 42.3 121.5 44.0C122.0 45.7 123.0 48.0 122.3 48.5C121.6 48.9 118.9 47.9 117.5 46.9C116.0 45.8 113.9 42.0 113.4 42.4C112.9 42.8 115.1 48.5 114.4 49.5C113.7 50.5 110.8 49.5 109.4 48.5C107.9 47.5 106.9 42.9 105.7 43.4C104.5 43.9 103.4 49.2 102.3 51.5C101.1 53.9 100.0 56.9 98.8 57.6C97.6 58.3 95.5 57.4 95.2 55.6C94.8 53.7 96.1 49.3 96.8 46.5C97.5 43.6 98.9 41.2 99.6 38.4C100.4 35.5 100.8 32.2 101.3 29.2C101.7 26.3 100.7 21.6 102.3 20.5Z" fill="#c9b088"/>
<path d="M105.3 25.2C106.7 26.0 111.0 28.2 113.4 30.3C115.8 32.3 118.5 36.2 119.5 37.3" fill="none" stroke="#9c7e58" stroke-width="1.4" stroke-linecap="round" stroke-linejoin="round"/>
<path d="M103.3 34.3C104.1 35.3 107.2 38.4 108.3 40.4C109.5 42.4 110.0 45.4 110.4 46.5" fill="none" stroke="#9c7e58" stroke-width="1.3" stroke-linecap="round" stroke-linejoin="round"/>
<path d="M74.1 26.2C75.8 23.6 78.7 21.7 81.4 20.5C84.1 19.4 87.5 19.0 90.3 19.3C93.2 19.6 96.3 20.8 98.4 22.2C100.5 23.5 101.9 25.5 102.9 27.4C103.9 29.3 104.4 31.3 104.5 33.5C104.6 35.7 104.2 37.9 103.3 40.4C102.4 42.9 100.6 46.3 99.2 48.5C97.8 50.6 96.8 52.2 94.8 53.3C92.8 54.5 89.5 55.4 87.1 55.4C84.6 55.4 82.2 54.8 80.0 53.3C77.8 51.9 75.6 49.3 74.1 46.5C72.7 43.6 71.3 39.7 71.3 36.3C71.3 33.0 72.4 28.8 74.1 26.2Z" fill="#bfa47c"/>
<path d="M82.6 24.6C84.0 23.4 87.6 22.4 89.1 23.0C90.7 23.6 91.9 26.3 91.9 28.2C92.0 30.2 90.5 34.1 89.5 34.7C88.5 35.3 86.9 31.7 85.9 31.9C84.9 32.0 84.2 35.9 83.4 35.5C82.6 35.2 81.1 31.7 81.0 29.8C80.9 28.0 81.3 25.7 82.6 24.6Z" fill="#0b0506"/>
<path d="M88.7 36.3C90.1 36.9 94.6 42.1 95.6 44.0C96.5 45.9 95.3 47.7 94.4 47.7C93.4 47.6 91.1 44.8 89.9 43.6C88.7 42.4 87.3 41.6 87.1 40.4C86.9 39.2 87.3 35.7 88.7 36.3Z" fill="#0b0506"/>
<path d="M75.3 33.9C75.9 34.9 76.1 39.5 77.0 42.0C77.8 44.5 80.3 47.5 80.6 48.9C80.9 50.2 79.7 51.2 78.6 50.1C77.5 49.0 75.0 44.8 74.1 42.4C73.2 40.0 73.1 37.3 73.3 35.9C73.5 34.5 74.7 32.9 75.3 33.9Z" fill="#0b0506"/>
<path d="M98.4 30.3C99.0 30.7 100.6 34.0 100.9 36.3C101.1 38.6 100.3 41.8 99.6 44.0C99.0 46.2 97.5 49.0 96.8 49.7C96.1 50.4 95.0 49.6 95.2 48.1C95.3 46.5 97.3 42.7 97.6 40.4C97.9 38.0 97.1 35.6 97.2 33.9C97.3 32.2 97.8 29.8 98.4 30.3Z" fill="#1a0e0a"/>
<path d="M92.1 24.2C92.9 24.9 95.8 26.6 96.8 28.6C97.8 30.7 98.2 35.0 98.4 36.3" fill="none" stroke="#ead9b4" stroke-width="1.6" stroke-linecap="round" stroke-linejoin="round"/>
<path d="M79.4 34.3C80.0 35.3 81.7 38.4 83.0 40.4C84.4 42.3 86.7 45.1 87.5 46.0" fill="none" stroke="#ead9b4" stroke-width="1.5" stroke-linecap="round" stroke-linejoin="round"/>
<path d="M3.6 73.2C4.2 71.7 7.8 69.3 11.1 67.1C14.5 64.9 19.1 61.7 23.9 59.8C28.7 57.9 34.6 56.8 40.1 55.8C45.6 54.7 51.7 53.4 56.7 53.3C61.7 53.3 66.8 53.7 69.9 55.4C73.0 57.0 75.2 60.8 75.3 63.1C75.5 65.3 72.7 67.4 70.9 68.7C69.1 70.0 66.1 69.4 64.4 70.8C62.7 72.1 62.4 76.1 60.8 76.8C59.1 77.6 56.1 74.5 54.7 75.2C53.3 76.0 53.7 80.5 52.2 81.3C50.8 82.1 47.6 78.8 46.2 79.9C44.7 81.0 44.7 86.0 43.5 88.0C42.4 89.9 40.7 91.4 39.5 91.4C38.2 91.4 36.4 89.7 36.0 88.0C35.7 86.2 38.1 82.2 37.5 80.9C36.9 79.5 34.3 79.1 32.4 79.9C30.5 80.6 28.2 84.6 26.3 85.3C24.5 86.1 21.7 85.8 21.3 84.5C20.9 83.3 24.6 78.8 23.9 77.8C23.2 76.9 19.7 78.2 17.2 78.9C14.7 79.5 11.1 81.7 9.1 81.9C7.1 82.1 5.2 80.9 5.1 79.9C4.9 78.9 8.3 76.9 8.1 75.8C7.9 74.7 3.1 74.6 3.6 73.2Z" fill="#c9b088"/>
<path d="M8.1 74.4C10.8 73.2 18.6 69.2 24.3 67.1C30.0 65.0 36.5 63.0 42.5 61.6C48.6 60.3 56.0 59.3 60.8 59.0C65.5 58.7 69.2 59.5 70.9 59.6" fill="none" stroke="#9c7e58" stroke-width="1.5" stroke-linecap="round" stroke-linejoin="round"/>
<path d="M19.2 68.7C18.4 70.4 15.0 77.2 14.2 78.9" fill="none" stroke="#1c100a" stroke-width="2.3" stroke-linecap="round" stroke-linejoin="round"/>
<path d="M30.4 65.1C30.0 67.5 28.7 77.4 28.4 79.9" fill="none" stroke="#1c100a" stroke-width="2.3" stroke-linecap="round" stroke-linejoin="round"/>
<path d="M41.5 62.2C41.3 65.7 40.7 79.5 40.5 82.9" fill="none" stroke="#1c100a" stroke-width="2.3" stroke-linecap="round" stroke-linejoin="round"/>
<path d="M51.6 60.2C51.9 63.0 52.8 74.1 53.1 76.8" fill="none" stroke="#1c100a" stroke-width="2.3" stroke-linecap="round" stroke-linejoin="round"/>
<path d="M60.8 59.0C61.2 61.0 62.8 68.8 63.2 70.8" fill="none" stroke="#1c100a" stroke-width="2.3" stroke-linecap="round" stroke-linejoin="round"/>
<path d="M12.2 67.7C14.2 66.5 19.6 62.5 24.3 60.6C29.0 58.8 35.1 57.7 40.5 56.6C45.9 55.5 54.0 54.6 56.7 54.1" fill="none" stroke="#ead9b4" stroke-width="1.4" stroke-linecap="round" stroke-linejoin="round"/></g></svg>
<svg style="left:103px;top:143px;overflow:hidden" width="55" height="55" viewBox="0 0 161 160" preserveAspectRatio="none"><filter id="ob3"><feGaussianBlur stdDeviation="0.45"/></filter><g filter="url(#ob3)"><rect x="-4" y="-4" width="169" height="168" fill="#0b0506"/>
<linearGradient id="gtop" x1="0" x2="1" y1="0" y2="0"><stop offset="0" stop-color="#84b860"/><stop offset="0.13" stop-color="#8cb868"/><stop offset="0.2" stop-color="#c8bc90"/><stop offset="1" stop-color="#d4c29a"/></linearGradient>
<rect y="0.2" x="-4" width="169" height="1.5" fill="url(#gtop)"/>
<rect y="3.4" x="-4" width="169" height="3.9" fill="#ecd2c6"/>
<rect y="7.1" x="-4" width="169" height="4.6" fill="#c8a080"/>
<line x1="-3" x2="164" y1="9.4" y2="9.4" stroke="#e4c8a8" stroke-width="2.8" stroke-dasharray="1.8 1.4"/>
<rect y="11.5" x="-4" width="169" height="2.8" fill="#eedcb2"/>
<rect y="14.2" x="-4" width="80" height="0.9" fill="#6f9a50" opacity=".8"/>
<rect y="94.9" x="-4" width="169" height="3.7" fill="#ecd2c6"/>
<rect y="98.4" x="-4" width="169" height="4.4" fill="#c8a080"/>
<line x1="-3" x2="164" y1="100.6" y2="100.6" stroke="#e4c8a8" stroke-width="2.7" stroke-dasharray="1.8 1.4"/>
<rect y="102.6" x="-4" width="169" height="2.7" fill="#eedcb2"/>
<rect y="145.3" x="-4" width="169" height="3.9" fill="#ecd2c6"/>
<rect y="148.9" x="-4" width="169" height="4.5" fill="#c8a080"/>
<line x1="-3" x2="164" y1="151.2" y2="151.2" stroke="#e4c8a8" stroke-width="2.8" stroke-dasharray="1.8 1.4"/>
<rect y="153.2" x="-4" width="169" height="2.8" fill="#eedcb2"/>
<rect y="50" x="-4" width="169" height="11" fill="#d9c69c"/>
<rect y="50" x="-4" width="169" height="1.5" fill="#f4ead0"/>
<rect y="59.5" x="-4" width="169" height="1.5" fill="#cdb88e"/>
<rect y="112.5" x="-4" width="169" height="2.6" fill="#e6d0b6"/>
<rect y="115" x="-4" width="169" height="8.5" fill="#3c2a1c"/>
<line x1="1" x2="161" y1="119.2" y2="119.2" stroke="#bfa88c" stroke-width="6" stroke-dasharray="1.2 1.3 1.2 1.2 4 1.9"/>
<rect y="123.4" x="-4" width="169" height="3.1" fill="#d8c6ae"/>
<rect y="126.5" x="-4" width="169" height="18.8" fill="#d2b497"/>
<rect y="126.5" x="-4" width="169" height="6.2" fill="#120806"/>
<ellipse cx="-2.0" cy="133" rx="4.6" ry="5.6" fill="#d2b497"/>
<ellipse cx="8.5" cy="133.4" rx="3.6" ry="4.4" fill="#e6d0b6"/>
<path d="M-5.0 139q3 -7 8 -8q-1 6 -5 9z" fill="#eedcc4"/>
<path d="M8.0 145.3l1 -3l2.5 -1l0.5 -4.2l2.4 1.2l0.6 3l3 0.8l1 3.2z" fill="#120806"/>
<rect x="13.8" y="140.4" width="2" height="1.6" fill="#f0e4d0"/>
<ellipse cx="19.9" cy="133" rx="4.6" ry="5.6" fill="#d2b497"/>
<ellipse cx="30.4" cy="133.4" rx="3.6" ry="4.4" fill="#e6d0b6"/>
<path d="M16.9 139q3 -7 8 -8q-1 6 -5 9z" fill="#eedcc4"/>
<path d="M29.9 145.3l1 -3l2.5 -1l0.5 -4.2l2.4 1.2l0.6 3l3 0.8l1 3.2z" fill="#120806"/>
<rect x="35.7" y="140.4" width="2" height="1.6" fill="#f0e4d0"/>
<ellipse cx="41.8" cy="133" rx="4.6" ry="5.6" fill="#d2b497"/>
<ellipse cx="52.3" cy="133.4" rx="3.6" ry="4.4" fill="#e6d0b6"/>
<path d="M38.8 139q3 -7 8 -8q-1 6 -5 9z" fill="#eedcc4"/>
<path d="M51.8 145.3l1 -3l2.5 -1l0.5 -4.2l2.4 1.2l0.6 3l3 0.8l1 3.2z" fill="#120806"/>
<rect x="57.6" y="140.4" width="2" height="1.6" fill="#f0e4d0"/>
<ellipse cx="63.7" cy="133" rx="4.6" ry="5.6" fill="#d2b497"/>
<ellipse cx="74.2" cy="133.4" rx="3.6" ry="4.4" fill="#e6d0b6"/>
<path d="M60.7 139q3 -7 8 -8q-1 6 -5 9z" fill="#eedcc4"/>
<path d="M73.7 145.3l1 -3l2.5 -1l0.5 -4.2l2.4 1.2l0.6 3l3 0.8l1 3.2z" fill="#120806"/>
<rect x="79.5" y="140.4" width="2" height="1.6" fill="#f0e4d0"/>
<ellipse cx="85.6" cy="133" rx="4.6" ry="5.6" fill="#d2b497"/>
<ellipse cx="96.1" cy="133.4" rx="3.6" ry="4.4" fill="#e6d0b6"/>
<path d="M82.6 139q3 -7 8 -8q-1 6 -5 9z" fill="#eedcc4"/>
<path d="M95.6 145.3l1 -3l2.5 -1l0.5 -4.2l2.4 1.2l0.6 3l3 0.8l1 3.2z" fill="#120806"/>
<rect x="101.4" y="140.4" width="2" height="1.6" fill="#f0e4d0"/>
<ellipse cx="107.5" cy="133" rx="4.6" ry="5.6" fill="#d2b497"/>
<ellipse cx="118.0" cy="133.4" rx="3.6" ry="4.4" fill="#e6d0b6"/>
<path d="M104.5 139q3 -7 8 -8q-1 6 -5 9z" fill="#eedcc4"/>
<path d="M117.5 145.3l1 -3l2.5 -1l0.5 -4.2l2.4 1.2l0.6 3l3 0.8l1 3.2z" fill="#120806"/>
<rect x="123.3" y="140.4" width="2" height="1.6" fill="#f0e4d0"/>
<ellipse cx="129.4" cy="133" rx="4.6" ry="5.6" fill="#d2b497"/>
<ellipse cx="139.9" cy="133.4" rx="3.6" ry="4.4" fill="#e6d0b6"/>
<path d="M126.4 139q3 -7 8 -8q-1 6 -5 9z" fill="#eedcc4"/>
<path d="M139.4 145.3l1 -3l2.5 -1l0.5 -4.2l2.4 1.2l0.6 3l3 0.8l1 3.2z" fill="#120806"/>
<rect x="145.2" y="140.4" width="2" height="1.6" fill="#f0e4d0"/>
<ellipse cx="151.3" cy="133" rx="4.6" ry="5.6" fill="#d2b497"/>
<ellipse cx="161.8" cy="133.4" rx="3.6" ry="4.4" fill="#e6d0b6"/>
<path d="M148.3 139q3 -7 8 -8q-1 6 -5 9z" fill="#eedcc4"/>
<path d="M161.3 145.3l1 -3l2.5 -1l0.5 -4.2l2.4 1.2l0.6 3l3 0.8l1 3.2z" fill="#120806"/>
<rect x="167.1" y="140.4" width="2" height="1.6" fill="#f0e4d0"/>
<ellipse cx="173.2" cy="133" rx="4.6" ry="5.6" fill="#d2b497"/>
<ellipse cx="183.7" cy="133.4" rx="3.6" ry="4.4" fill="#e6d0b6"/>
<path d="M170.2 139q3 -7 8 -8q-1 6 -5 9z" fill="#eedcc4"/>
<path d="M183.2 145.3l1 -3l2.5 -1l0.5 -4.2l2.4 1.2l0.6 3l3 0.8l1 3.2z" fill="#120806"/>
<rect x="189.0" y="140.4" width="2" height="1.6" fill="#f0e4d0"/>
<path d="M7.7 49.5C8.5 48.1 10.3 43.9 12.6 41.4C14.8 38.9 18.1 36.3 21.3 34.3C24.4 32.3 28.2 30.7 31.4 29.2C34.6 27.8 39.0 26.4 40.5 25.8" fill="none" stroke="#ead9b4" stroke-width="2.5" stroke-linecap="round" stroke-linejoin="round"/>
<path d="M10.1 50.5C11.1 49.3 13.5 45.4 15.8 43.2C18.1 41.0 20.9 39.1 23.9 37.3C26.9 35.6 31.0 33.9 34.0 32.7C37.1 31.4 40.8 30.3 42.1 29.8" fill="none" stroke="#9c7e58" stroke-width="1.2" stroke-linecap="round" stroke-linejoin="round"/>
<path d="M35.4 28.6C35.7 27.0 40.1 22.9 42.9 21.1C45.7 19.4 49.2 18.4 52.2 18.1C55.3 17.8 58.5 18.4 61.2 19.3C63.9 20.3 66.6 21.8 68.4 23.8C70.3 25.7 71.3 28.3 72.1 31.1C72.9 33.8 73.4 37.1 73.3 40.4C73.2 43.6 72.2 49.2 71.3 50.5C70.4 51.9 69.1 50.0 67.8 48.5C66.6 47.0 65.6 43.5 63.8 41.4C62.0 39.2 59.6 37.1 57.1 35.5C54.6 33.9 51.6 32.6 49.0 31.9C46.4 31.1 43.8 31.4 41.5 30.9C39.3 30.3 35.2 30.3 35.4 28.6Z" fill="#c9b088"/>
<path d="M43.5 24.2C45.1 23.9 50.0 22.2 53.1 22.6C56.1 22.9 59.3 24.2 61.8 26.2C64.2 28.2 66.8 33.0 67.8 34.3" fill="none" stroke="#ead9b4" stroke-width="1.6" stroke-linecap="round" stroke-linejoin="round"/>
<path d="M45.6 28.6C47.0 28.8 51.6 28.4 54.3 29.4C57.0 30.5 59.7 32.5 61.8 34.7C63.9 36.9 66.0 41.1 66.8 42.4" fill="none" stroke="#9c7e58" stroke-width="1.5" stroke-linecap="round" stroke-linejoin="round"/>
<path d="M70.1 32.3C70.1 34.3 69.6 40.3 70.1 44.4C70.5 48.5 71.4 52.9 72.9 57.0C74.5 61.1 77.0 65.8 79.4 69.1C81.8 72.4 84.4 75.0 87.5 76.8C90.5 78.6 94.2 79.7 97.6 79.9C101.0 80.0 104.7 79.2 107.7 77.8C110.8 76.5 113.5 74.1 115.8 71.8C118.2 69.4 120.4 66.1 121.9 63.7C123.5 61.2 124.6 58.1 125.2 57.0" fill="none" stroke="#c9b088" stroke-width="7.4" stroke-linecap="round" stroke-linejoin="round"/>
<path d="M68.4 40.4C68.9 42.9 69.5 50.8 70.9 55.6C72.3 60.3 74.4 64.9 77.0 68.7C79.5 72.5 84.5 76.8 86.1 78.4" fill="none" stroke="#9c7e58" stroke-width="1.4" stroke-linecap="round" stroke-linejoin="round"/>
<path d="M79.4 76.4C81.0 77.5 85.5 81.6 89.1 82.9C92.8 84.2 97.5 84.6 101.3 84.1C105.0 83.6 108.7 81.9 111.8 80.1C114.8 78.2 118.2 74.3 119.5 73.2" fill="none" stroke="#ead9b4" stroke-width="1.7" stroke-linecap="round" stroke-linejoin="round"/>
<path d="M125.2 57.0C125.7 55.8 126.8 52.1 128.4 50.1C129.9 48.1 132.2 46.2 134.5 45.2C136.8 44.2 139.7 43.7 142.2 44.0C144.7 44.4 147.6 45.7 149.5 47.3C151.3 48.8 153.0 51.1 153.5 53.3C154.0 55.6 152.5 59.4 152.3 60.6" fill="none" stroke="#c9b088" stroke-width="7.6" stroke-linecap="round" stroke-linejoin="round"/>
<path d="M127.6 51.5C128.7 50.7 131.6 47.5 134.1 46.5C136.5 45.4 139.7 44.9 142.2 45.2C144.7 45.6 147.9 47.9 149.0 48.5" fill="none" stroke="#ead9b4" stroke-width="1.6" stroke-linecap="round" stroke-linejoin="round"/>
<path d="M129.6 63.1C129.8 61.4 132.4 60.4 134.1 59.6C135.7 58.9 138.3 58.3 139.7 58.6C141.2 58.9 141.3 61.0 142.8 61.6C144.3 62.2 146.7 62.8 148.8 62.2C151.0 61.7 153.7 59.7 155.9 58.6C158.1 57.5 160.7 54.9 162.0 55.6C163.4 56.2 164.4 60.1 164.0 62.7C163.7 65.2 162.3 69.0 160.0 70.8C157.6 72.5 153.2 72.8 149.9 73.2C146.5 73.6 142.6 73.8 139.7 73.2C136.9 72.6 134.3 71.4 132.6 69.7C131.0 68.1 129.4 64.7 129.6 63.1Z" fill="#c9b088"/>
<path d="M139.7 63.1C140.8 62.6 143.7 63.7 144.8 64.7C145.9 65.6 146.7 67.8 146.2 68.7C145.7 69.7 143.1 70.6 141.8 70.3C140.4 70.1 138.5 68.7 138.1 67.5C137.8 66.3 138.6 63.5 139.7 63.1Z" fill="#0b0506"/>
<path d="M149.5 64.3C149.9 63.3 152.9 62.6 153.9 63.1C154.9 63.5 155.9 66.1 155.5 67.1C155.1 68.1 152.5 69.6 151.5 69.1C150.5 68.7 149.0 65.3 149.5 64.3Z" fill="#0b0506"/>
<path d="M141.8 56.2C142.5 56.6 145.3 57.5 146.2 58.6C147.2 59.8 147.2 62.3 147.4 63.1" fill="none" stroke="#ead9b4" stroke-width="2.2" stroke-linecap="round" stroke-linejoin="round"/>
<path d="M152.3 70.8C152.8 69.6 156.3 68.6 158.0 69.9C159.6 71.3 161.7 77.0 162.0 78.9C162.3 80.7 161.2 81.6 160.0 81.3C158.8 80.9 156.2 78.6 154.9 76.8C153.6 75.1 151.8 71.9 152.3 70.8Z" fill="#c9b088"/>
<path d="M71.3 31.9C71.8 30.7 72.4 26.6 74.1 24.6C75.8 22.6 78.7 20.7 81.4 19.7C84.1 18.7 87.5 18.2 90.3 18.5C93.2 18.8 96.3 20.0 98.4 21.3C100.6 22.7 102.1 24.7 103.3 26.6C104.4 28.5 105.2 30.7 105.3 32.7C105.4 34.7 104.3 37.7 104.1 38.8" fill="none" stroke="#c9b088" stroke-width="6.2" stroke-linecap="round" stroke-linejoin="round"/>
<path d="M75.3 25.0C76.4 24.3 79.5 21.8 82.0 20.9C84.5 20.1 87.7 19.5 90.3 19.7C92.9 20.0 96.4 22.1 97.6 22.6" fill="none" stroke="#ead9b4" stroke-width="1.4" stroke-linecap="round" stroke-linejoin="round"/>
<path d="M102.3 20.5C103.8 19.4 107.9 21.3 110.4 22.6C112.8 23.8 115.1 26.2 117.1 28.2C119.0 30.3 121.2 33.0 122.3 34.7C123.5 36.5 124.4 38.1 123.9 38.8C123.5 39.4 119.9 37.5 119.5 38.4C119.1 39.2 121.0 42.3 121.5 44.0C122.0 45.7 123.0 48.0 122.3 48.5C121.6 48.9 118.9 47.9 117.5 46.9C116.0 45.8 113.9 42.0 113.4 42.4C112.9 42.8 115.1 48.5 114.4 49.5C113.7 50.5 110.8 49.5 109.4 48.5C107.9 47.5 106.9 42.9 105.7 43.4C104.5 43.9 103.4 49.2 102.3 51.5C101.1 53.9 100.0 56.9 98.8 57.6C97.6 58.3 95.5 57.4 95.2 55.6C94.8 53.7 96.1 49.3 96.8 46.5C97.5 43.6 98.9 41.2 99.6 38.4C100.4 35.5 100.8 32.2 101.3 29.2C101.7 26.3 100.7 21.6 102.3 20.5Z" fill="#c9b088"/>
<path d="M105.3 25.2C106.7 26.0 111.0 28.2 113.4 30.3C115.8 32.3 118.5 36.2 119.5 37.3" fill="none" stroke="#9c7e58" stroke-width="1.4" stroke-linecap="round" stroke-linejoin="round"/>
<path d="M103.3 34.3C104.1 35.3 107.2 38.4 108.3 40.4C109.5 42.4 110.0 45.4 110.4 46.5" fill="none" stroke="#9c7e58" stroke-width="1.3" stroke-linecap="round" stroke-linejoin="round"/>
<path d="M74.1 26.2C75.8 23.6 78.7 21.7 81.4 20.5C84.1 19.4 87.5 19.0 90.3 19.3C93.2 19.6 96.3 20.8 98.4 22.2C100.5 23.5 101.9 25.5 102.9 27.4C103.9 29.3 104.4 31.3 104.5 33.5C104.6 35.7 104.2 37.9 103.3 40.4C102.4 42.9 100.6 46.3 99.2 48.5C97.8 50.6 96.8 52.2 94.8 53.3C92.8 54.5 89.5 55.4 87.1 55.4C84.6 55.4 82.2 54.8 80.0 53.3C77.8 51.9 75.6 49.3 74.1 46.5C72.7 43.6 71.3 39.7 71.3 36.3C71.3 33.0 72.4 28.8 74.1 26.2Z" fill="#bfa47c"/>
<path d="M82.6 24.6C84.0 23.4 87.6 22.4 89.1 23.0C90.7 23.6 91.9 26.3 91.9 28.2C92.0 30.2 90.5 34.1 89.5 34.7C88.5 35.3 86.9 31.7 85.9 31.9C84.9 32.0 84.2 35.9 83.4 35.5C82.6 35.2 81.1 31.7 81.0 29.8C80.9 28.0 81.3 25.7 82.6 24.6Z" fill="#0b0506"/>
<path d="M88.7 36.3C90.1 36.9 94.6 42.1 95.6 44.0C96.5 45.9 95.3 47.7 94.4 47.7C93.4 47.6 91.1 44.8 89.9 43.6C88.7 42.4 87.3 41.6 87.1 40.4C86.9 39.2 87.3 35.7 88.7 36.3Z" fill="#0b0506"/>
<path d="M75.3 33.9C75.9 34.9 76.1 39.5 77.0 42.0C77.8 44.5 80.3 47.5 80.6 48.9C80.9 50.2 79.7 51.2 78.6 50.1C77.5 49.0 75.0 44.8 74.1 42.4C73.2 40.0 73.1 37.3 73.3 35.9C73.5 34.5 74.7 32.9 75.3 33.9Z" fill="#0b0506"/>
<path d="M98.4 30.3C99.0 30.7 100.6 34.0 100.9 36.3C101.1 38.6 100.3 41.8 99.6 44.0C99.0 46.2 97.5 49.0 96.8 49.7C96.1 50.4 95.0 49.6 95.2 48.1C95.3 46.5 97.3 42.7 97.6 40.4C97.9 38.0 97.1 35.6 97.2 33.9C97.3 32.2 97.8 29.8 98.4 30.3Z" fill="#1a0e0a"/>
<path d="M92.1 24.2C92.9 24.9 95.8 26.6 96.8 28.6C97.8 30.7 98.2 35.0 98.4 36.3" fill="none" stroke="#ead9b4" stroke-width="1.6" stroke-linecap="round" stroke-linejoin="round"/>
<path d="M79.4 34.3C80.0 35.3 81.7 38.4 83.0 40.4C84.4 42.3 86.7 45.1 87.5 46.0" fill="none" stroke="#ead9b4" stroke-width="1.5" stroke-linecap="round" stroke-linejoin="round"/>
<path d="M3.6 73.2C4.2 71.7 7.8 69.3 11.1 67.1C14.5 64.9 19.1 61.7 23.9 59.8C28.7 57.9 34.6 56.8 40.1 55.8C45.6 54.7 51.7 53.4 56.7 53.3C61.7 53.3 66.8 53.7 69.9 55.4C73.0 57.0 75.2 60.8 75.3 63.1C75.5 65.3 72.7 67.4 70.9 68.7C69.1 70.0 66.1 69.4 64.4 70.8C62.7 72.1 62.4 76.1 60.8 76.8C59.1 77.6 56.1 74.5 54.7 75.2C53.3 76.0 53.7 80.5 52.2 81.3C50.8 82.1 47.6 78.8 46.2 79.9C44.7 81.0 44.7 86.0 43.5 88.0C42.4 89.9 40.7 91.4 39.5 91.4C38.2 91.4 36.4 89.7 36.0 88.0C35.7 86.2 38.1 82.2 37.5 80.9C36.9 79.5 34.3 79.1 32.4 79.9C30.5 80.6 28.2 84.6 26.3 85.3C24.5 86.1 21.7 85.8 21.3 84.5C20.9 83.3 24.6 78.8 23.9 77.8C23.2 76.9 19.7 78.2 17.2 78.9C14.7 79.5 11.1 81.7 9.1 81.9C7.1 82.1 5.2 80.9 5.1 79.9C4.9 78.9 8.3 76.9 8.1 75.8C7.9 74.7 3.1 74.6 3.6 73.2Z" fill="#c9b088"/>
<path d="M8.1 74.4C10.8 73.2 18.6 69.2 24.3 67.1C30.0 65.0 36.5 63.0 42.5 61.6C48.6 60.3 56.0 59.3 60.8 59.0C65.5 58.7 69.2 59.5 70.9 59.6" fill="none" stroke="#9c7e58" stroke-width="1.5" stroke-linecap="round" stroke-linejoin="round"/>
<path d="M19.2 68.7C18.4 70.4 15.0 77.2 14.2 78.9" fill="none" stroke="#1c100a" stroke-width="2.3" stroke-linecap="round" stroke-linejoin="round"/>
<path d="M30.4 65.1C30.0 67.5 28.7 77.4 28.4 79.9" fill="none" stroke="#1c100a" stroke-width="2.3" stroke-linecap="round" stroke-linejoin="round"/>
<path d="M41.5 62.2C41.3 65.7 40.7 79.5 40.5 82.9" fill="none" stroke="#1c100a" stroke-width="2.3" stroke-linecap="round" stroke-linejoin="round"/>
<path d="M51.6 60.2C51.9 63.0 52.8 74.1 53.1 76.8" fill="none" stroke="#1c100a" stroke-width="2.3" stroke-linecap="round" stroke-linejoin="round"/>
<path d="M60.8 59.0C61.2 61.0 62.8 68.8 63.2 70.8" fill="none" stroke="#1c100a" stroke-width="2.3" stroke-linecap="round" stroke-linejoin="round"/>
<path d="M12.2 67.7C14.2 66.5 19.6 62.5 24.3 60.6C29.0 58.8 35.1 57.7 40.5 56.6C45.9 55.5 54.0 54.6 56.7 54.1" fill="none" stroke="#ead9b4" stroke-width="1.4" stroke-linecap="round" stroke-linejoin="round"/></g></svg>
<div class="a" style="left:103px;top:143px;width:55px;height:55px;background-image:conic-gradient(#0d55b8 25%,transparent 0 50%,#0d55b8 0 75%,transparent 0);background-size:2.25px 2.25px;opacity:.62"></div>

<div class="a" style="left:601.5px;top:174.5px;width:5px;height:5px;border-radius:50%;background:#fff;"></div><div class="a" style="left:603px;top:176px;width:2px;height:2px;background:#000;"></div>
<div class="a" style="left:638px;top:230px;width:30px;height:30px;box-sizing:border-box;border:1px solid #8a8a8a;background-color:#fff;background-image:conic-gradient(#bdbdbd 25%,#fff 0 50%,#bdbdbd 0 75%,#fff 0);background-size:2px 2px;"></div>
<div class="a" style="left:645px;top:237px;width:11px;height:11px;background:#000;"></div>
<div class="a" style="left:649px;top:241px;width:12px;height:12px;box-sizing:border-box;background:#fff;border:1px solid #9a9a9a;border-top-color:#ddd;border-left-color:#ddd;"></div>
<div class="a" style="left:668px;top:231px;width:12px;height:13px;background-color:#fff;background-image:conic-gradient(#c4c4c4 25%,#fff 0 50%,#c4c4c4 0 75%,#fff 0);background-size:8px 8px;background-position:4px 0.5px;outline:1px solid #c4c4c4;outline-offset:-1px;"></div>
<div class="a" style="left:681.8px;top:230.5px;width:13px;height:13.3px;box-sizing:border-box;background:#000000;border:1.3px solid #2a2a2a;"></div>
<div class="a" style="left:696.4px;top:230.5px;width:13px;height:13.3px;box-sizing:border-box;background:#850a0a;border:1.3px solid #2a2a2a;"></div>
<div class="a" style="left:711.0px;top:230.5px;width:13px;height:13.3px;box-sizing:border-box;background:#008000;border:1.3px solid #2a2a2a;"></div>
<div class="a" style="left:725.6px;top:230.5px;width:13px;height:13.3px;box-sizing:border-box;background:#808000;border:1.3px solid #2a2a2a;"></div>
<div class="a" style="left:740.2px;top:230.5px;width:13px;height:13.3px;box-sizing:border-box;background:#000080;border:1.3px solid #2a2a2a;"></div>
<div class="a" style="left:754.8px;top:230.5px;width:13px;height:13.3px;box-sizing:border-box;background:#800080;border:1.3px solid #2a2a2a;"></div>
<div class="a" style="left:769.4px;top:230.5px;width:13px;height:13.3px;box-sizing:border-box;background:#008080;border:1.3px solid #2a2a2a;"></div>
<div class="a" style="left:784.0px;top:230.5px;width:13px;height:13.3px;box-sizing:border-box;background:#c0c0c0;border:1.3px solid #2a2a2a;"></div>
<div class="a" style="left:681.8px;top:247.0px;width:13px;height:13.3px;box-sizing:border-box;background:#808080;border:1.3px solid #2a2a2a;"></div>
<div class="a" style="left:696.4px;top:247.0px;width:13px;height:13.3px;box-sizing:border-box;background:#fb1010;border:1.3px solid #2a2a2a;"></div>
<div class="a" style="left:711.0px;top:247.0px;width:13px;height:13.3px;box-sizing:border-box;background:#00ff00;border:1.3px solid #2a2a2a;"></div>
<div class="a" style="left:725.6px;top:247.0px;width:13px;height:13.3px;box-sizing:border-box;background:#ffff00;border:1.3px solid #2a2a2a;"></div>
<div class="a" style="left:740.2px;top:247.0px;width:13px;height:13.3px;box-sizing:border-box;background:#0000ff;border:1.3px solid #2a2a2a;"></div>
<div class="a" style="left:754.8px;top:247.0px;width:13px;height:13.3px;box-sizing:border-box;background:#ff00ff;border:1.3px solid #2a2a2a;"></div>
<div class="a" style="left:769.4px;top:247.0px;width:13px;height:13.3px;box-sizing:border-box;background:#00ffff;border:1.3px solid #2a2a2a;"></div>
<div class="a" style="left:784.0px;top:247.0px;width:13px;height:13.3px;box-sizing:border-box;background:#ffffff;border:1.3px solid #2a2a2a;"></div>
<div class="a" style="left:645px;top:263px;width:145px;height:144px;background:radial-gradient(circle closest-side at 50% 50%,rgba(128,128,128,1) 0,rgba(128,128,128,.68) 28%,rgba(128,128,128,.33) 60%,rgba(128,128,128,0) 100%),conic-gradient(from 0deg at 50% 50%,#f00,#ff0,#0f0,#0ff,#00f,#f0f,#f00);"></div>
<div class="a" style="left:698px;top:423px;width:66px;height:3px;background:#e7eaea;border:1px solid #d6d6d6;box-sizing:border-box;"></div>
<svg style="left:753px;top:416px" width="11" height="18" viewBox="0 0 11 18"><path d="M0.3 0.3H10.7V12L5.5 17.6L0.3 12Z" fill="#1f74d4" stroke="#1565c0" stroke-width="0.6"/></svg>
<div class="a" style="left:640px;top:445px;width:73px;height:18.5px;background:#000;"></div>
<div class="a" style="left:720px;top:445px;width:73px;height:18.5px;background:#fff;"></div>

<svg id="icons" style="left:0;top:0" width="800" height="542" viewBox="0 0 800 542">
<defs><filter id="bl" x="-10%" y="-10%" width="120%" height="120%"><feGaussianBlur stdDeviation="0.35"/></filter></defs>
<g filter="url(#bl)">
<defs><linearGradient id="ai" x1="0" y1="0" x2="0.6" y2="1"><stop offset="0" stop-color="#8d949c"/><stop offset="0.55" stop-color="#7d9ab4"/><stop offset="1" stop-color="#4f97d2"/></linearGradient></defs>
<rect x="11" y="10.2" width="10.6" height="10.6" fill="url(#ai)"/>
<path d="M17 14 L23.6 8.2 M18.5 10 L21.5 16.5 M16.5 11.5 L23 13.5" stroke="#a9aeb4" stroke-width="1.3" fill="none"/>
<path d="M13 17.5h2v2h-2zM16 16h2v2h-2zM15 13.5h1.5v1.5h-1.5z" fill="#9cc4e6" opacity=".8"/>
<path d="M690.2 14.5H700" stroke="#222" stroke-width="1"/>
<rect x="731.7" y="10.4" width="8.8" height="8.5" fill="none" stroke="#111" stroke-width="1.1"/>
<path d="M773.4 10L783 19.4M783 10L773.4 19.4" stroke="#111" stroke-width="1.1"/>
<path d="M749.5 30V46" stroke="#e2e2e2" stroke-width="1"/>
<path d="M765.2 30V46" stroke="#e2e2e2" stroke-width="1"/>
<path d="M766.8 30V46" stroke="#e2e2e2" stroke-width="1"/>
<path d="M782.8 30V46" stroke="#e2e2e2" stroke-width="1"/>
<path d="M784.3 30V46" stroke="#e2e2e2" stroke-width="1"/>
<path d="M753 40.2H759" stroke="#4c587e" stroke-width="1.8"/>
<path d="M773 34.5H777.7V38.5H776.5" stroke="#55628a" stroke-width="1.1" fill="none"/>
<rect x="771.3" y="36.6" width="4.8" height="3.9" stroke="#55628a" stroke-width="1.2" fill="#fff"/>
<path d="M789.3 35L795.3 40.8M795.3 35L789.3 40.8" stroke="#4c5c8c" stroke-width="1.7"/>
<path d="M7.2 30.5H14.4L17.5 33.6V42.1H7.2Z" fill="#f2f2f2" stroke="#dcdcdc" stroke-width="0.7"/>
<path d="M14.4 30.5V33.6H17.5" fill="none" stroke="#dcdcdc" stroke-width="0.7"/>
<path d="M8.7 34.0H16.0" stroke="#d6d6d6" stroke-width="0.9"/>
<path d="M8.7 36.3H16.0" stroke="#d6d6d6" stroke-width="0.9"/>
<path d="M8.7 38.6H16.0" stroke="#d6d6d6" stroke-width="0.9"/>
<path d="M8.7 40.9H16.0" stroke="#d6d6d6" stroke-width="0.9"/>
<rect x="3.2" y="52.3" width="1.4" height="1.2" fill="#8e8e8e"/>
<rect x="3.2" y="56.9" width="1.4" height="1.2" fill="#8e8e8e"/>
<rect x="3.2" y="61.5" width="1.4" height="1.2" fill="#8e8e8e"/>
<rect x="3.2" y="66.1" width="1.4" height="1.2" fill="#8e8e8e"/>
<rect x="3.2" y="70.7" width="1.4" height="1.2" fill="#8e8e8e"/>
<rect x="3.2" y="75.3" width="1.4" height="1.2" fill="#8e8e8e"/>
<rect x="3.2" y="82.0" width="1.4" height="1.2" fill="#8e8e8e"/>
<rect x="3.2" y="86.6" width="1.4" height="1.2" fill="#8e8e8e"/>
<rect x="3.2" y="91.2" width="1.4" height="1.2" fill="#8e8e8e"/>
<rect x="3.2" y="95.8" width="1.4" height="1.2" fill="#8e8e8e"/>
<rect x="3.2" y="100.4" width="1.4" height="1.2" fill="#8e8e8e"/>
<rect x="3.2" y="105.0" width="1.4" height="1.2" fill="#8e8e8e"/>
<path d="M94.3 52.3V76" stroke="#4a4a4a" stroke-width="1"/>
<path d="M156.4 52.3V76" stroke="#4a4a4a" stroke-width="1"/>
<path d="M331.5 52.3V76" stroke="#4a4a4a" stroke-width="1"/>
<path d="M422.0 52.3V76" stroke="#4a4a4a" stroke-width="1"/>
<path d="M151 82V106.5" stroke="#b0b0b0" stroke-width="1.8"/>
<path d="M269.5 82V106.5" stroke="#555" stroke-width="1"/>
<path d="M13.2 55.0H22.7L26.8 59.1V72.2H13.2Z" fill="#efefef" stroke="#d6d6d6" stroke-width="0.7"/>
<path d="M22.7 55.0V59.1H26.8" fill="none" stroke="#d6d6d6" stroke-width="0.7"/>
<path d="M15.2 60.2H24.8" stroke="#cfcfcf" stroke-width="0.9"/>
<path d="M15.2 62.2H24.8" stroke="#cfcfcf" stroke-width="0.9"/>
<path d="M15.2 64.3H24.8" stroke="#cfcfcf" stroke-width="0.9"/>
<path d="M15.2 66.4H24.8" stroke="#cfcfcf" stroke-width="0.9"/>
<path d="M15.2 68.4H24.8" stroke="#cfcfcf" stroke-width="0.9"/>
<path d="M15.2 70.5H24.8" stroke="#cfcfcf" stroke-width="0.9"/>
<path d="M38 56.5H44.5L46 58.5H50V70.5H38Z" fill="#2c5596"/>
<path d="M42.2 66L47 56.8L57.8 56.8L53 66Z" fill="#f4f4f4" stroke="#c8c8c8" stroke-width="0.4"/>
<path d="M47.5 59.5L49 56.8M49.5 59.5L51 56.8M51.5 59.5L53 56.8M53.5 59.5L55 56.8" stroke="#888" stroke-width="0.7"/>
<path d="M38 70.5L44 60.6H59.6L53.6 70.5Z" fill="#4f93d6"/>
<path d="M38 70.5L41.5 64.8H57L53.6 70.5Z" fill="#3f7fc4" opacity=".55"/>
<path d="M69 55.8H83.2L86 58.6V71.8H69Z" fill="#1d2a56"/>
<rect x="73.8" y="55.8" width="8.4" height="5.3" fill="#f4f4f4"/>
<rect x="78.6" y="56.6" width="1.8" height="3.6" fill="#1d2a56"/>
<rect x="72" y="65.4" width="12" height="5.6" fill="#d9d9d9"/>
<rect x="72" y="69.6" width="12" height="1.6" fill="#5aa0d8"/>
<path d="M72 67H84" stroke="#bdbdbd" stroke-width="0.6"/>
<circle cx="111.2" cy="63.6" r="9" fill="#9f9f9f"/>
<circle cx="140.0" cy="63.6" r="9" fill="#9f9f9f"/>
<circle cx="230.0" cy="63.6" r="9" fill="#9f9f9f"/>
<circle cx="258.1" cy="63.6" r="9" fill="#9f9f9f"/>
<circle cx="286.3" cy="63.6" r="9" fill="#9f9f9f"/>
<path d="M165.0 58H173.5L177.0 61.5V73H165.0Z" fill="#a4cde3"/>
<path d="M173.5 58L177.0 61.5H173.5Z" fill="#7fb4d4"/>
<path d="M165.0 55H177.0M165.3 53V57M176.7 53V57" stroke="#8a8a8a" stroke-width="0.9" fill="none"/>
<path d="M179.8 58V73M178.0 58H181.6M178.0 73H181.6" stroke="#8a8a8a" stroke-width="0.9" fill="none"/>
<circle cx="167.0" cy="70.6" r="3.7" fill="#4c9a2c"/>
<path d="M164.7 70.6H169.3M167.0 68.3V72.9" stroke="#fff" stroke-width="1.5"/>
<path d="M194.0 58H202.5L206.0 61.5V73H194.0Z" fill="#9a9a9a"/>
<path d="M202.5 58L206.0 61.5H202.5Z" fill="#8a8a8a"/>
<path d="M194.0 55H206.0M194.3 53V57M205.7 53V57" stroke="#8a8a8a" stroke-width="0.9" fill="none"/>
<path d="M208.8 58V73M207.0 58H210.6M207.0 73H210.6" stroke="#8a8a8a" stroke-width="0.9" fill="none"/>
<circle cx="195.2" cy="70.3" r="3.6" fill="#9a9a9a"/>
<path d="M311.0 54.3H319.8L323.5 58.0V70.5H311.0Z" fill="#e2e2e2" stroke="#cfcfcf" stroke-width="0.7"/>
<path d="M319.8 54.3V58.0H323.5" fill="none" stroke="#cfcfcf" stroke-width="0.7"/>
<path d="M312.9 59.2H321.6" stroke="#bcbcbc" stroke-width="0.9"/>
<path d="M312.9 61.6H321.6" stroke="#bcbcbc" stroke-width="0.9"/>
<path d="M312.9 64.0H321.6" stroke="#bcbcbc" stroke-width="0.9"/>
<path d="M312.9 66.4H321.6" stroke="#bcbcbc" stroke-width="0.9"/>
<path d="M312.9 68.9H321.6" stroke="#bcbcbc" stroke-width="0.9"/>
<path d="M306.0 56.6H315.1L319.0 60.5V72.4H306.0Z" fill="#eeeeee" stroke="#d0d0d0" stroke-width="0.7"/>
<path d="M315.1 56.6V60.5H319.0" fill="none" stroke="#d0d0d0" stroke-width="0.7"/>
<path d="M307.9 61.3H317.1" stroke="#c4c4c4" stroke-width="0.9"/>
<path d="M307.9 63.2H317.1" stroke="#c4c4c4" stroke-width="0.9"/>
<path d="M307.9 65.1H317.1" stroke="#c4c4c4" stroke-width="0.9"/>
<path d="M307.9 67.0H317.1" stroke="#c4c4c4" stroke-width="0.9"/>
<path d="M307.9 68.9H317.1" stroke="#c4c4c4" stroke-width="0.9"/>
<path d="M307.9 70.8H317.1" stroke="#c4c4c4" stroke-width="0.9"/>
<path d="M337.5 56.2L346.8 54.9V63.4H337.5ZM347.9 54.7L359 53.1V63.4H347.9ZM337.5 64.5H346.8V73L337.5 71.7ZM347.9 64.5H359V74.8L347.9 73.2Z" fill="#0fa9ec"/>
<path d="M377.6 59.8C378.6 58.8 380.3 58.4 381.6 59C382.8 59.4 383.6 60.2 384.1 61.1C382.6 62 381.9 63.4 382 64.9C382.1 66.6 383.1 67.9 384.6 68.5C384 70.1 383.1 71.5 382 72.5C381.1 73.3 380 73.3 379 72.8C378 72.4 377 72.4 376 72.8C375 73.3 374 73.2 373.2 72.4C370.6 69.8 369 65.6 370.2 62.4C371 60.2 373 58.8 375.1 59C376 59.1 376.9 59.6 377.6 59.8Z" fill="#595959"/>
<path d="M377.3 58.9C377.2 57 378.6 55.2 380.6 54.8C380.8 56.8 379.3 58.7 377.3 58.9Z" fill="#595959"/>
<path d="M400.5 59.6A4.7 4.5 0 0 1 409.9 59.6Z" fill="#97c13c"/>
<path d="M401.6 56.6L400.6 55M408.8 56.6L409.8 55" stroke="#97c13c" stroke-width="0.7"/>
<rect x="400.5" y="60.4" width="9.4" height="8.2" rx="1" fill="#97c13c"/>
<rect x="397.6" y="60.6" width="2.1" height="6.4" rx="1" fill="#97c13c"/>
<rect x="410.7" y="60.6" width="2.1" height="6.4" rx="1" fill="#97c13c"/>
<rect x="402.1" y="67.5" width="2.2" height="4.7" rx="1" fill="#97c13c"/>
<rect x="406.1" y="67.5" width="2.2" height="4.7" rx="1" fill="#97c13c"/>
<circle cx="403.2" cy="57.8" r="0.5" fill="#fff"/><circle cx="407.2" cy="57.8" r="0.5" fill="#fff"/>
<path d="M448.5 63.2L448.5 64.4L446.2 65.2L445.9 66.2L447.5 68.0L446.9 69.1L444.5 68.7L443.8 69.4L444.2 71.8L443.1 72.4L441.3 70.8L440.3 71.1L439.5 73.4L438.3 73.4L437.5 71.1L436.5 70.8L434.7 72.4L433.6 71.8L434.0 69.4L433.3 68.7L430.9 69.1L430.3 68.0L431.9 66.2L431.6 65.2L429.3 64.4L429.3 63.2L431.6 62.4L431.9 61.4L430.3 59.6L430.9 58.5L433.3 58.9L434.0 58.2L433.6 55.8L434.7 55.2L436.5 56.8L437.5 56.5L438.3 54.2L439.5 54.2L440.3 56.5L441.3 56.8L443.1 55.2L444.2 55.8L443.8 58.2L444.5 58.9L446.9 58.5L447.5 59.6L445.9 61.4L446.2 62.4Z" fill="#a0a0a0"/>
<circle cx="438.9" cy="63.8" r="5.6" fill="#8a8a8a"/>
<circle cx="438.9" cy="63.8" r="4.3" fill="#c2c2c2"/>
<circle cx="438.9" cy="63.8" r="2.7" fill="#fff"/>
<path d="M20.8 84L26.6 90.4H23.4V97H26.6L20.8 103.2L15 97H18.2V90.4H15Z" fill="#80bccf"/>
<rect x="18.2" y="89.5" width="5.2" height="8.3" fill="#5f8da8"/>
<path d="M12 93.6H29.8" stroke="#b4b4b4" stroke-width="1"/>
<path d="M39 93.6L45.4 87.8V91H52.6V87.8L59 93.6L52.6 99.4V96.2H45.4V99.4Z" fill="#80bccf"/>
<rect x="44.8" y="91" width="8.4" height="5.2" fill="#5f8da8"/>
<path d="M49 85V102.4" stroke="#b8b8b8" stroke-width="1"/>
<path d="M77.6 87.8A6.8 6.8 0 1 1 70.8 94.6" fill="none" stroke="#80bccf" stroke-width="2.6"/>
<path d="M82.4 99.4A6.8 6.8 0 0 1 70.8 94.6" fill="none" stroke="#5f8da8" stroke-width="2.6"/>
<path d="M73.4 87.8L78.2 84.0L78.2 91.6Z" fill="#80bccf"/>
<circle cx="77.6" cy="94.6" r="1.6" fill="#1f2b4d"/>
<path d="M105.6 87.8A6.8 6.8 0 1 0 112.4 94.6" fill="none" stroke="#80bccf" stroke-width="2.3"/>
<path d="M100.8 99.4A6.8 6.8 0 0 0 112.4 94.6" fill="none" stroke="#5f8da8" stroke-width="2.6"/>
<path d="M109.8 87.8L105.0 84.0L105.0 91.6Z" fill="#80bccf"/>
<circle cx="105.6" cy="94.6" r="1.6" fill="#1f2b4d"/>
<path d="M141.6 96A7.6 7.6 0 1 0 137.5 100.6" fill="none" stroke="#8fc3d6" stroke-width="1.4"/>
<path d="M127.2 97.5A7.6 7.6 0 0 0 137.5 100.6" fill="none" stroke="#5f8da8" stroke-width="1.5"/>
<path d="M138.6 94.4H144.4L141.5 98.4Z" fill="#7fbcd0"/>
<text x="134.1" y="97.6" font-family="Liberation Sans, sans-serif" font-weight="bold" font-size="10.5" text-anchor="middle" fill="#3a3a3a" textLength="5.6" lengthAdjust="spacingAndGlyphs">X</text>
<circle cx="167.8" cy="93.7" r="9" fill="#62a23a"/>
<circle cx="167.8" cy="93.7" r="8.2" fill="none" stroke="#7dba50" stroke-width="1"/>
<circle cx="167.8" cy="94.0" r="6.2" fill="#527c34"/>
<g transform="rotate(0 167.8 93.7)"><path d="M163.0 93.7L171.2 89.3L169.0 93.7L171.2 98.1Z" fill="#e4e6e2"/></g>
<circle cx="195.8" cy="93.7" r="9" fill="#62a23a"/>
<circle cx="195.8" cy="93.7" r="8.2" fill="none" stroke="#7dba50" stroke-width="1"/>
<circle cx="195.8" cy="94.0" r="6.2" fill="#527c34"/>
<g transform="rotate(180 195.8 93.7)"><path d="M191.0 93.7L199.2 89.3L197.0 93.7L199.2 98.1Z" fill="#e4e6e2"/></g>
<circle cx="224.0" cy="93.7" r="9" fill="#62a23a"/>
<circle cx="224.0" cy="93.7" r="8.2" fill="none" stroke="#7dba50" stroke-width="1"/>
<circle cx="224.0" cy="94.0" r="6.2" fill="#527c34"/>
<g transform="rotate(90 224.0 93.7)"><path d="M219.2 93.7L227.4 89.3L225.2 93.7L227.4 98.1Z" fill="#e4e6e2"/></g>
<circle cx="252.4" cy="93.7" r="9" fill="#62a23a"/>
<circle cx="252.4" cy="93.7" r="8.2" fill="none" stroke="#7dba50" stroke-width="1"/>
<circle cx="252.4" cy="94.0" r="6.2" fill="#527c34"/>
<g transform="rotate(270 252.4 93.7)"><path d="M247.6 93.7L255.8 89.3L253.6 93.7L255.8 98.1Z" fill="#e4e6e2"/></g>
<circle cx="284.4" cy="91.8" r="6.4" fill="#fff" stroke="#a6cfe0" stroke-width="1.6"/>
<path d="M290.0 97.4L295.2 102.4" stroke="#2e2e2e" stroke-width="2.6" stroke-linecap="round"/>
<path d="M280.8 91.8H288.0" stroke="#5d9cb8" stroke-width="1.5"/>
<path d="M284.4 88.2V95.4" stroke="#5d9cb8" stroke-width="1.5"/>
<circle cx="312.8" cy="91.8" r="6.4" fill="#fff" stroke="#a6cfe0" stroke-width="1.6"/>
<path d="M318.4 97.4L323.6 102.4" stroke="#2e2e2e" stroke-width="2.6" stroke-linecap="round"/>
<path d="M309.2 91.8H316.4" stroke="#5d9cb8" stroke-width="1.5"/>
<rect x="335" y="86" width="16" height="15.8" fill="#9e9e9e"/>
<rect x="5.6" y="116.6" width="18" height="14" fill="#b5cee6" stroke="#2f3a55" stroke-width="1.5" stroke-dasharray="3.6 1.6"/>
<path d="M5.6 116.6H23.6L5.6 130.6Z" fill="#c2d7ea" opacity=".7"/>
<ellipse cx="42.9" cy="123.7" rx="9.4" ry="7.5" fill="#b5cee6" stroke="#2f3a55" stroke-width="1.5" stroke-dasharray="3.6 1.6"/>
<path d="M5.6 149.8L23.2 145.4C22.5 152 18 157 11.2 159.8Z" fill="#b5cee6" stroke="#2f3a55" stroke-width="1.5" stroke-dasharray="3.4 1.5"/>
<path d="M36.5 144.4C40.5 143 44 145.5 45.5 149.5C47 152.5 52 153 52 156C52 159.5 46 160 41.5 158C36.5 156 33.5 151.5 34 148C34.3 146.2 35 145 36.5 144.4Z" fill="#b5cee6" stroke="#2f3a55" stroke-width="1.5" stroke-dasharray="3.4 1.5"/>
<rect x="60.5" y="112.4" width="1.2" height="1.2" fill="#9a9a9a"/>
<rect x="65.2" y="112.4" width="1.2" height="1.2" fill="#9a9a9a"/>
<rect x="69.8" y="112.4" width="1.2" height="1.2" fill="#9a9a9a"/>
<rect x="74.5" y="112.4" width="1.2" height="1.2" fill="#9a9a9a"/>
<circle cx="68.5" cy="126.3" r="0.7" fill="#666"/>
<circle cx="67.7" cy="146.2" r="1.3" fill="#000"/>
<circle cx="67.7" cy="166" r="2.3" fill="#000"/>
<circle cx="67.7" cy="186" r="4.2" fill="#000"/>
<path d="M66.3 207.7L69.8 205.3" stroke="#222" stroke-width="1.2"/>
<path d="M64.5 229.5L71.4 223.0" stroke="#222" stroke-width="1.2"/>
<path d="M63.0 251.6L72.8 241.4" stroke="#222" stroke-width="1.2"/>
<path d="M66.2 265.4L69.7 268.1" stroke="#222" stroke-width="1.2"/>
<path d="M64.6 282.8L70.9 289.5" stroke="#222" stroke-width="1.2"/>
<path d="M63.3 301.3L73.0 311.8" stroke="#222" stroke-width="1.2"/>
<path d="M6.4 172.2C11 172.5 14.2 175.5 14.4 180C14.6 184.5 18 187.7 22.7 188" fill="none" stroke="#555" stroke-width="1"/>
<circle cx="14.4" cy="172.2" r="1.6" fill="#4a9ce8"/><circle cx="14" cy="188" r="1.6" fill="#4a9ce8"/>
<path d="M14.4 173.5V186.5" stroke="#7ab6ee" stroke-width="0.7"/>
<rect x="5" y="170.8" width="2.8" height="2.8" fill="#333"/><rect x="21.3" y="186.6" width="2.8" height="2.8" fill="#333"/><rect x="13.1" y="178.7" width="2.6" height="2.6" fill="#444"/>
<path d="M42.5 179.5L51.3 188" stroke="#2a3557" stroke-width="3" stroke-linecap="round"/>
<path d="M40.9 169.8L41.6 174.1L45.7 175.6L41.8 177.6L41.7 181.9L38.6 178.9L34.4 180.1L36.3 176.2L33.9 172.6L38.2 173.2Z" fill="#f6c61c" stroke="#f6c61c" stroke-width="0.8" stroke-linejoin="round"/>
<path d="M13 211L17 214.6L11 221.6L8.2 223.8L7.6 223.2L8.6 219.4Z" fill="#a3cce8"/>
<path d="M13 211L14.6 212.4L8.6 220.6L8.6 219.4Z" fill="#c9e3f4"/>
<path d="M11.6 208.6L19.6 215.2" stroke="#3c4864" stroke-width="2.8"/>
<circle cx="18.2" cy="207.8" r="4.1" fill="#4a4a4e"/>
<circle cx="19.2" cy="207" r="1.9" fill="#34343c"/>
<path d="M41.6 206H52L48.2 213.6H37.8Z" fill="#e79cb6"/>
<path d="M37.8 213.6H48.2L44.2 221.6H33.8Z" fill="#b6d6f0"/>
<g transform="rotate(-38 16.8 242)"><rect x="10.6" y="236" width="12.4" height="12.4" fill="#c9c9c9"/><rect x="10.6" y="239" width="12.4" height="6" fill="#3b84cc"/><rect x="10.6" y="239" width="6" height="6" fill="#2b5c9c"/></g>
<path d="M10 237.5C6.5 237.5 4.6 240 4.6 244V249.4H7.4V244C7.4 242 8.6 241 11.5 240.5Z" fill="#5a9ada"/>
<g transform="rotate(-27 46.6 243.6)"><rect x="41.6" y="237.4" width="10" height="13.2" rx="0.8" fill="#4b92d4"/><rect x="43.3" y="240.4" width="6.6" height="6.4" fill="#eef2f6"/><rect x="44" y="234.6" width="5.2" height="3" fill="#b9bec4"/></g>
<path d="M40 235.2L33.2 236.6L34.2 248.2Z" fill="#8ec0ea"/>
<circle cx="14.5" cy="263.9" r="3.6" fill="#ababab"/>
<path d="M12.6 266H16.4L17 273.8H12Z" fill="#9c9c9c"/>
<path d="M8.4 274.2H20.8L22.2 277V279.9H7.2V277Z" fill="#2b3142"/>
<path d="M11 277.2L14.5 275.4L18 277.2" stroke="#0f1420" stroke-width="1.2" fill="none"/>
<g transform="rotate(32 43.2 271)"><rect x="41.1" y="261.4" width="4.3" height="14.6" fill="#f0a832"/><rect x="43.4" y="261.4" width="2" height="14.6" fill="#dc9426"/><rect x="41.1" y="258.6" width="4.3" height="3.2" fill="#e2532e"/><rect x="41.1" y="261.2" width="4.3" height="1" fill="#d9d9d9"/><path d="M41.1 276L43.25 281.2L45.4 276Z" fill="#c9a27a"/><path d="M42.5 279.4L43.25 281.2L44 279.4Z" fill="#333"/></g>
<path d="M21.4 290.8L17 298.2" stroke="#8b5232" stroke-width="3.6" stroke-linecap="round"/>
<path d="M12 296.6L21 302.2L19.8 304.2L10.8 298.6Z" fill="#ececec" stroke="#cfcfcf" stroke-width="0.4"/>
<path d="M10.8 298.6L19.8 304.2L16.4 308.8H4.4C6 305.4 8.6 301.6 10.8 298.6Z" fill="#f5b81f"/>
<path d="M9.5 303L8 308.6M13 304L12 308.6" stroke="#e09a10" stroke-width="0.8"/>
<path d="M35.6 295.4L50.4 304" stroke="#7fb2d6" stroke-width="1.6"/>
<circle cx="35.6" cy="295.4" r="2.7" fill="#8dbcdc"/><circle cx="50.4" cy="304" r="2.7" fill="#8dbcdc"/>
<circle cx="35.6" cy="295.4" r="1" fill="#6c8fb0"/><circle cx="50.4" cy="304" r="1" fill="#6c8fb0"/>
<path d="M43.4 294.6H49.6M46.5 291.5V297.7" stroke="#3fa52e" stroke-width="2"/>
<path d="M14.7 317.2C17 321.5 21 325.5 21 330.2A6.3 6.4 0 0 1 8.4 330.2C8.4 325.5 12.4 321.5 14.7 317.2Z" fill="#5a9fe2"/>
<path d="M13.2 322.8C12 325 10.8 327 10.8 329.4" stroke="#a9d0f4" stroke-width="1.6" fill="none" stroke-linecap="round"/>
<text x="43.1" y="332.6" font-family="Liberation Sans, sans-serif" font-weight="bold" font-size="20.5" text-anchor="middle" fill="#2a3048" stroke="#2a3048" stroke-width="0.9">A</text>
<rect x="36.6" y="333.7" width="4.4" height="2.3" fill="#e87252"/><rect x="41" y="333.7" width="4.2" height="2.3" fill="#62b244"/><rect x="45.2" y="333.7" width="4.4" height="2.3" fill="#72b9ea"/>
<rect x="5.6" y="353.5" width="18.2" height="14.2" fill="#6aa8e2"/>
<path d="M5.6 353.5V367.7H23.8Z" fill="#548fd6" opacity=".6"/>
<rect x="9.1" y="357.7" width="11" height="6.4" fill="#f6f6f6"/>
<rect x="33.8" y="353.5" width="18.2" height="14.2" fill="#6aa8e2"/>
<path d="M33.8 353.5H52V367.7Z" fill="#8fc0ea" opacity=".75"/>
<ellipse cx="14.6" cy="388.7" rx="8.2" ry="6.2" fill="#f0f0f0" stroke="#d9431f" stroke-width="2.4"/>
<ellipse cx="42.8" cy="388.7" rx="9.2" ry="7.4" fill="#d8472a"/>
<path d="M42.8 388.7V381.3A9.2 7.4 0 0 1 52 388.7A9.2 7.4 0 0 1 49.3 393.9Z" fill="#e2877a"/>
<path d="M42.8 381.3A9.2 7.4 0 0 0 35.8 383.9L42.8 388.7Z" fill="#cf6a4a"/>
<rect x="796" y="532" width="1.4" height="1.4" fill="#b4b4b4"/>
<rect x="793" y="535" width="1.4" height="1.4" fill="#b4b4b4"/>
<rect x="796" y="535" width="1.4" height="1.4" fill="#b4b4b4"/>
<rect x="790" y="538" width="1.4" height="1.4" fill="#b4b4b4"/>
<rect x="793" y="538" width="1.4" height="1.4" fill="#b4b4b4"/>
<rect x="796" y="538" width="1.4" height="1.4" fill="#b4b4b4"/>
</g></svg>
<svg id="wm" style="left:0;top:0" width="800" height="542" viewBox="0 0 800 542">
<defs><clipPath id="wmc"><rect x="0" y="440" width="220" height="93.5"/></clipPath></defs>
<g clip-path="url(#wmc)" opacity="0.135">
<circle cx="39.9" cy="484" r="24.1" fill="none" stroke="#e8522a" stroke-width="11.4"/>
<circle cx="65.7" cy="453" r="7" fill="#e8522a"/>
<path d="M12.9 518.5A44 44 0 0 0 66.9 518.5" fill="none" stroke="#e8522a" stroke-width="10.5"/>
<circle cx="107.8" cy="484" r="24.1" fill="none" stroke="#e8522a" stroke-width="11.4"/>
<circle cx="133.6" cy="453" r="7" fill="#e8522a"/>
<path d="M80.8 518.5A44 44 0 0 0 134.8 518.5" fill="none" stroke="#e8522a" stroke-width="10.5"/>
<path d="M154 445.8V513Q154 525.7 166.5 525.7H174.8" fill="none" stroke="#8cc63f" stroke-width="14.2"/>
<rect x="160" y="465.4" width="14.8" height="12.6" fill="#8cc63f"/>
<path d="M189.7 445.8V513Q189.7 525.7 202.2 525.7H210" fill="none" stroke="#8cc63f" stroke-width="14"/>
<rect x="196" y="465.4" width="14" height="12.6" fill="#8cc63f"/>
</g></svg>
<!-- status bar -->
<span class="t" id="title" style="left:29.00px;top:9.16px;font-size:11.63px;color:#000;transform:scaleX(0.9360);">SoftOrbits Icon Maker - [New_2.bmp]</span>
<span class="t" id="m1" style="left:26.35px;top:31.55px;font-size:11.05px;color:#000;transform:scaleX(0.9572);">File</span>
<span class="t" id="m2" style="left:55.10px;top:31.55px;font-size:11.05px;color:#000;transform:scaleX(1.0002);">Edit</span>
<span class="t" id="m3" style="left:86.35px;top:31.55px;font-size:11.05px;color:#000;transform:scaleX(0.9811);">View</span>
<span class="t" id="m4" style="left:122.10px;top:31.55px;font-size:11.05px;color:#000;transform:scaleX(1.0032);">Image</span>
<span class="t" id="m5" style="left:165.10px;top:31.55px;font-size:11.05px;color:#000;transform:scaleX(1.0001);">Tools</span>
<span class="t" id="m6" style="left:203.35px;top:31.55px;font-size:11.05px;color:#000;transform:scaleX(0.9664);">Effects</span>
<span class="t" id="m7" style="left:248.20px;top:31.55px;font-size:11.05px;color:#000;transform:scaleX(1.0025);">Batch Mode</span>
<span class="t" id="m8" style="left:318.90px;top:31.55px;font-size:11.05px;color:#000;transform:scaleX(1.0332);">Window</span>
<span class="t" id="m9" style="left:371.90px;top:31.55px;font-size:11.05px;color:#000;transform:scaleX(1.0293);">Help</span>
<span class="t" id="thl" style="left:101.20px;top:201.58px;font-size:11.48px;color:#000;transform:scaleX(0.8795);">175x175 - 32</span>
<span class="t" id="st1" style="left:2.35px;top:527.77px;font-size:10.90px;color:#000;transform:scaleX(0.9513);">Ready</span>
<span class="t" id="st2" style="left:283.60px;top:527.77px;font-size:10.90px;color:#000;transform:scaleX(0.9415);">X: 292 Y: -066</span>
<span class="t" id="op" style="left:638.80px;top:420.91px;font-size:10.03px;color:#000;transform:scaleX(1.0009);">Opacity</span>
<span class="t" id="pc" style="left:770.60px;top:420.91px;font-size:10.03px;color:#000;transform:scaleX(0.9834);">100%</span>
<span class="t" id="h1" style="left:651.20px;top:447.73px;font-size:13.08px;color:#fff;transform:scaleX(1.0055);">00 00 00</span>
<span class="t" id="h2" style="left:730.70px;top:447.73px;font-size:13.08px;color:#000;transform:scaleX(0.9320);">FF FF FF</span>
<div class="a" style="left:1px;top:523px;width:798px;height:1px;background:#fcfcfc;"></div>
<div class="a" id="statusline" style="left:1px;top:524px;width:798px;height:1px;background:#e2e2e2;"></div>
<div class="a" style="left:1px;top:540px;width:798px;height:1px;background:#fafafa;"></div>
<div class="a" style="left:279px;top:526px;width:1px;height:14px;background:#d9d9d9;"></div>
<div class="a" style="left:424px;top:526px;width:1px;height:14px;background:#d9d9d9;"></div>

</body>
</html>
